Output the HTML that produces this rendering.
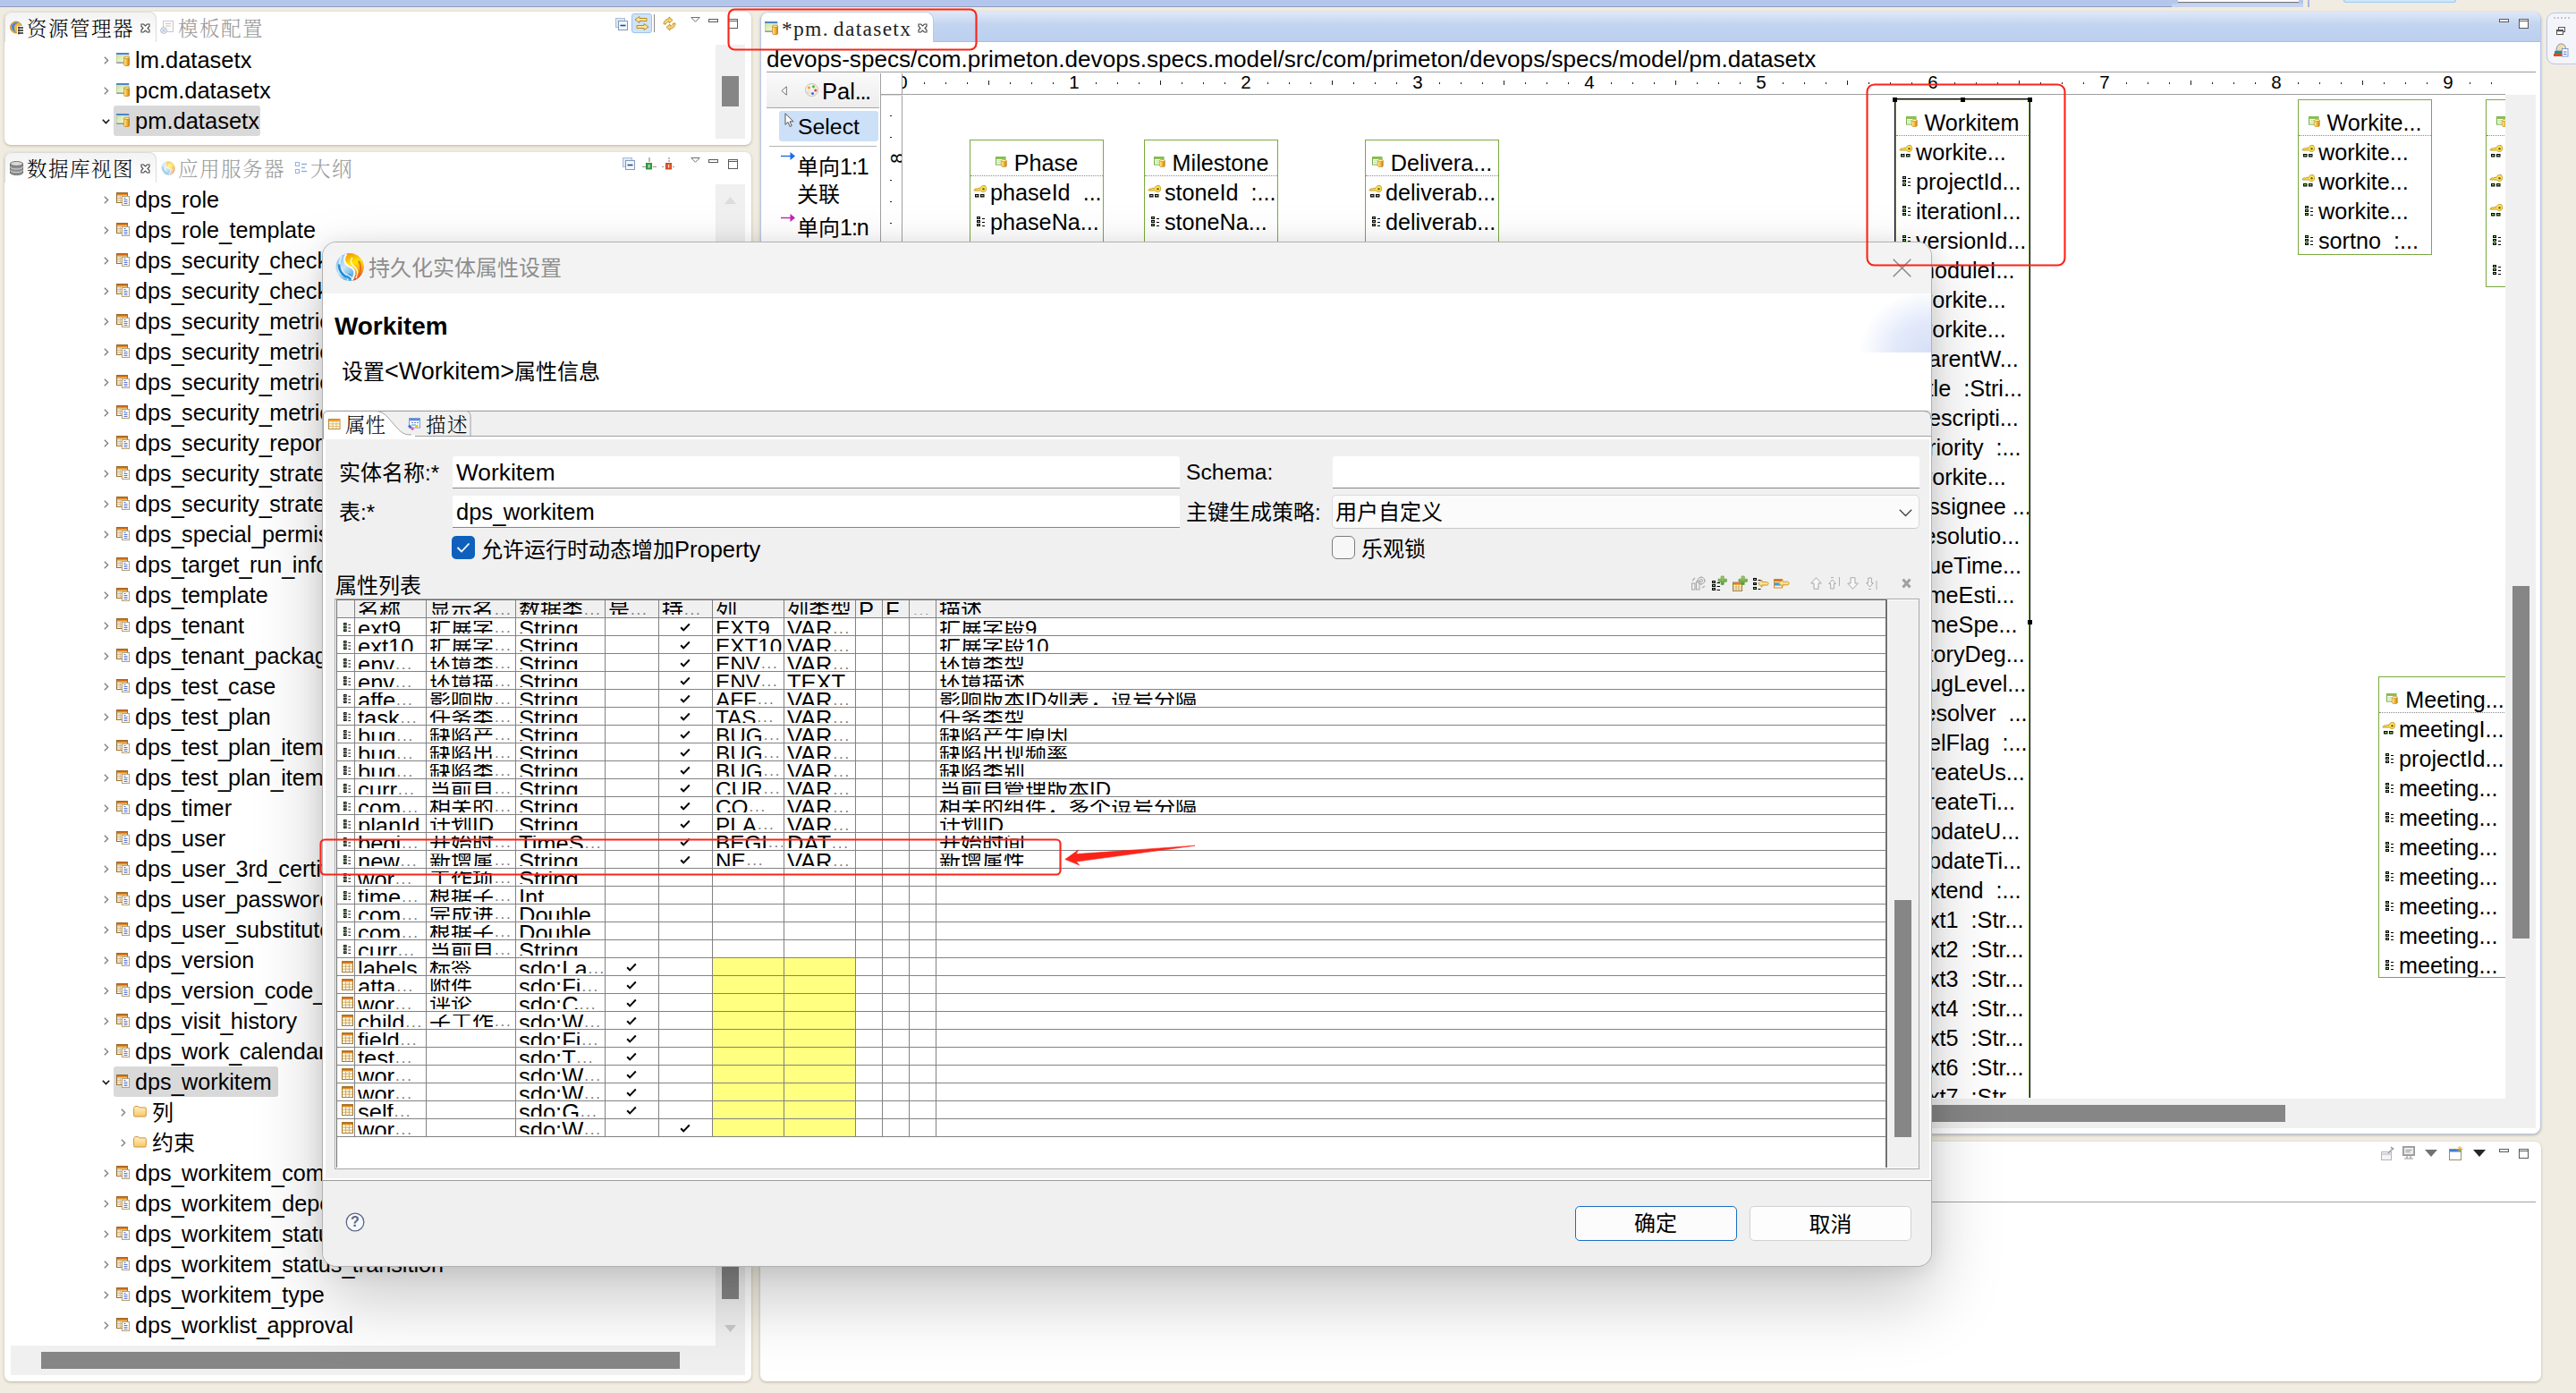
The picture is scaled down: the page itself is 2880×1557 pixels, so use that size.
<!DOCTYPE html>
<html lang="zh-CN"><head><meta charset="utf-8"><title>持久化实体属性设置</title>
<style>
html,body{margin:0;padding:0}
html{width:2880px;height:1557px;overflow:hidden;background:#f0ece1}
body{width:2880px;height:1557px;overflow:hidden;position:relative;background:#f0ece1;
 font-family:"Liberation Sans","Noto Sans CJK SC",sans-serif;font-size:25.5px;color:#000}
div,span,svg{position:absolute;box-sizing:border-box}
.ic{overflow:visible}
.t{white-space:nowrap;line-height:34px;height:34px}
.t2{font-size:25.200px}
s{text-decoration:none;letter-spacing:-2.600px;position:relative;top:2px}
.ser{font-family:"Liberation Serif","Noto Serif CJK SC",serif;font-weight:300;font-size:22.500px;letter-spacing:1.500px;white-space:nowrap;line-height:30px}
.cj{font-family:"Liberation Sans","Noto Sans CJK SC",sans-serif;font-size:24px;white-space:nowrap;padding-top:1px}
.cj b,.t b,.c b{font-weight:normal;font-size:25.5px}
.panel{background:#fff;border-radius:7px;box-shadow:0 1px 3px rgba(120,110,80,.45)}
.tab{border:1px solid #dcdcdc;border-bottom:none;border-radius:8px 8px 0 0;background:linear-gradient(#f3f3f3,#fff)}
.gray{color:#9a9a9a}
.sel{background:#d9d9d9;border-radius:3px}
.ent{border:1px solid #7aa93f;background:#fff}
.ent>div.in{left:0;top:0;right:0;bottom:0;overflow:hidden}
.ent .dot{left:0;right:0;height:0;border-top:1px dotted #8a8a8a}
.et{white-space:nowrap;line-height:33px;height:33px;font-size:25.200px}
.rul{font-size:20.5px;line-height:22px;white-space:nowrap}
.c{top:4px;height:14px;overflow:hidden;white-space:nowrap}
.c span{position:absolute;left:0;top:-5.800px;line-height:30px;font-size:25.5px;white-space:nowrap}
.c span.z{font-size:24px;font-family:"Liberation Sans","Noto Sans CJK SC",sans-serif}
.c i{font-style:normal;letter-spacing:1.800px;color:#777;font-size:17px;position:relative;top:-3.500px;margin-left:1px}
.vl{width:1px;background:#828282}
.hl{height:1px;background:#828282}
.ck{width:12px;height:10px}
</style></head><body>
<svg width="0" height="0" style="position:absolute"><defs>
<linearGradient id="gCyl" x1="0" x2="1"><stop offset="0" stop-color="#fff3a8"/><stop offset=".55" stop-color="#f3b52e"/><stop offset="1" stop-color="#c97d10"/></linearGradient>
<linearGradient id="gWin" x1="0" y1="0" x2="1" y2="1"><stop offset="0" stop-color="#c4e27e"/><stop offset="1" stop-color="#ffffff"/></linearGradient>
<linearGradient id="gFold" x1="0" y1="0" x2="0" y2="1"><stop offset="0" stop-color="#fff1c4"/><stop offset="1" stop-color="#f7c765"/></linearGradient>
<linearGradient id="gOr" x1="0" y1="0" x2="0" y2="1"><stop offset="0" stop-color="#c9540d"/><stop offset="1" stop-color="#f9b233"/></linearGradient>
<linearGradient id="gPlus" x1="0" y1="0" x2="0" y2="1"><stop offset="0" stop-color="#b9d36a"/><stop offset="1" stop-color="#3f9b3a"/></linearGradient>
<linearGradient id="gArr" x1="0" y1="0" x2="0" y2="1"><stop offset="0" stop-color="#fffbe0"/><stop offset="1" stop-color="#f3c24a"/></linearGradient>
<linearGradient id="gLogoB" x1="0" y1="0" x2="1" y2="1"><stop offset="0" stop-color="#5fb0ea"/><stop offset=".4" stop-color="#cfe5f7"/><stop offset=".75" stop-color="#4aa6e2"/><stop offset="1" stop-color="#0c80d0"/></linearGradient><linearGradient id="gLogoO" x1="0" y1="0" x2=".3" y2="1"><stop offset="0" stop-color="#f08a00"/><stop offset=".45" stop-color="#ffe400"/><stop offset=".8" stop-color="#f6a21a"/><stop offset="1" stop-color="#e4521c"/></linearGradient><radialGradient id="gLogo" cx=".35" cy=".3" r=".9"><stop offset="0" stop-color="#ffe27a"/><stop offset=".5" stop-color="#f59a1c"/><stop offset="1" stop-color="#e8601a"/></radialGradient>
<!-- datasetx file: window + cylinder 15x15 -->
<symbol id="iDs" viewBox="0 0 15 15"><rect x="0" y="0" width="14" height="11" fill="url(#gWin)" stroke="#9a9a9a" stroke-width=".6"/><rect x="0" y="0" width="14" height="2.2" fill="#4f86c9"/><rect x="0" y="2.2" width="14" height=".8" fill="#cfe0f3"/><rect x="0.3" y="10.6" width="8" height="1.2" fill="#8c8c8c"/><path d="M8.6 5.2h6v8.2a3 1.3 0 0 1-6 0z" fill="url(#gCyl)" stroke="#b9770f" stroke-width=".7"/><ellipse cx="11.6" cy="5.3" rx="3" ry="1.2" fill="#fff0a0" stroke="#b9770f" stroke-width=".7"/></symbol>
<!-- db table icon 15x15 -->
<symbol id="iTb" viewBox="0 0 15 15"><rect x=".5" y=".5" width="12" height="11" fill="#fff" stroke="#9b6a2c" stroke-width="1"/><rect x="1" y="1" width="11" height="2.4" fill="url(#gOr)"/><rect x="1" y="4" width="3.4" height="2" fill="#d8ecf7"/><rect x="1" y="6.8" width="3.4" height="2" fill="#d8ecf7"/><path d="M1 3.8h11M1 6.5h5M1 9.2h5M4.7 3.5v8" stroke="#c9a35c" stroke-width=".7" fill="none"/><rect x="6.500" y="4.500" width="8" height="10" fill="#fcfdff" stroke="#b5a074" stroke-width="1"/><path d="M8.500 6.500h2M8.500 8.500h4M8.500 10.500h4M8.500 12.500h4" stroke="#5b78cf" stroke-width="1"/></symbol>
<!-- folder 15x13 -->
<symbol id="iFo" viewBox="0 0 15 13"><path d="M.6 3.2c0-1.4.6-2.6 2.2-2.6h2.4c.9 0 1.3.5 1.7 1.3h6.2c.8 0 1.2.4 1.2 1.2v7.6c0 .9-.4 1.3-1.2 1.3H1.8C1 12 .6 11.600.6 10.700z" fill="url(#gFold)" stroke="#d39236" stroke-width="1"/></symbol>
<!-- entity icon 13x12 -->
<symbol id="iEn" viewBox="0 0 13 12"><rect x=".5" y=".5" width="10.500" height="8.600" fill="#fff" stroke="#74b043" stroke-width="1"/><rect x=".5" y=".5" width="10.500" height="2.500" fill="#8cc152"/><path d="M1.500 4.800h9M1.500 6.800h5" stroke="#b5dc8a" stroke-width="1"/><path d="M6.300 4.600h6v5.800a3 1.200 0 0 1-6 0z" fill="url(#gCyl)" stroke="#c08414" stroke-width=".6"/><ellipse cx="9.300" cy="4.600" rx="3" ry="1.100" fill="#fff3b0" stroke="#c08414" stroke-width=".6"/></symbol>
<!-- key attr icon 15x14 -->
<symbol id="iKey" viewBox="0 0 15 14"><path d="M.8 5.600l2.400-2 1.200.700 1.600-1.300 1.500 1c.8-2.200 2.400-3.600 4.300-3.600 1.800 0 3 1.400 3 3.400s-1.400 3.700-3.300 3.700c-1.300 0-2.300-.5-2.900-1.500H1.800z" fill="#fbe354" stroke="#b8901c" stroke-width=".9" stroke-linejoin="round"/><circle cx="11.500" cy="4.200" r="1.200" fill="#7a5a14"/><rect x="2" y="10" width="4.500" height="3.500" fill="#000"/><rect x="8" y="10" width="4.500" height="3.500" fill="#000"/><rect x="3" y="11" width="2.500" height="1.300" fill="#7fd35a"/><rect x="9" y="11" width="2.500" height="1.300" fill="#7fd35a"/></symbol>
<!-- plain attr icon 10x12 -->
<symbol id="iAt" viewBox="0 0 10 12"><g fill="#000"><rect x="0" y="0" width="4" height="3"/><rect x="0" y="4" width="4" height="3"/><rect x="0" y="8" width="4" height="3"/></g><g fill="#7fd35a"><rect x="1" y="1" width="2" height="1"/><rect x="1" y="5" width="2" height="1"/><rect x="1" y="9" width="2" height="1"/></g><path d="M6 2.500h3M6 6.500h3M6 10.500h3" stroke="#000" stroke-width="1"/></symbol>
<!-- table-row icon in grid (orange table) 13x13 -->
<symbol id="iGr" viewBox="0 0 13 13"><rect x=".5" y=".5" width="12" height="12" fill="#fffbe8" stroke="#a8782f" stroke-width="1"/><rect x="1" y="1" width="11" height="2.600" fill="url(#gOr)"/><path d="M1 6.200h11M1 9.200h11M4.600 3.600v9M8.400 3.600v9" stroke="#c9a35c" stroke-width=".9"/></symbol>
<!-- eclipse-like close x for tabs -->
<symbol id="iX" viewBox="0 0 11 11"><path d="M1 1h2.500l2 2 2-2H10v2.500l-2 2 2 2V10H7.500l-2-2-2 2H1V7.500l2-2-2-2z" fill="#fff" stroke="#4c4c4c" stroke-width="1.150"/></symbol>
<symbol id="iMin" viewBox="0 0 11 5"><rect x=".5" y=".5" width="10" height="3" fill="#fff" stroke="#5a5a5a" stroke-width="1"/></symbol>
<symbol id="iMax" viewBox="0 0 12 11"><rect x=".5" y=".5" width="10" height="10" fill="#fff" stroke="#5a5a5a" stroke-width="1"/><path d="M.5 2.500h10" stroke="#5a5a5a" stroke-width="1"/></symbol>
<symbol id="iTri" viewBox="0 0 11 6"><path d="M.8.500h9.400L5.500 5.300z" fill="#fff" stroke="#707070" stroke-width="1"/></symbol>
<symbol id="iColl" viewBox="0 0 14 14"><rect x=".5" y=".5" width="10" height="10" fill="#dbe9f8" stroke="#a9bcd8"/><rect x="3.500" y="3.500" width="10" height="10" fill="#f1f7fd" stroke="#8398b8"/><path d="M5.500 8.500h6" stroke="#1f4f8f" stroke-width="1.600"/></symbol>
<symbol id="iLogo" viewBox="0 0 32 32"><clipPath id="cLogo"><circle cx="16" cy="16" r="15.500"/></clipPath><g clip-path="url(#cLogo)"><rect width="32" height="32" fill="url(#gLogoB)"/><path d="M7 4C3 10 5 17 9 22s6 6 4 10" fill="none" stroke="#fff" stroke-width="1.600" opacity=".75"/><path d="M4 13c0 7 3 11 8 14" fill="none" stroke="#1283d4" stroke-width="2.600" opacity=".9"/><path d="M11 27c2 2 5 3 8 3l-2-6c-2-1-4-1-6 3z" fill="#1a8ad8" opacity=".85"/><path d="M12 24c3 1 6 3 8 7" fill="none" stroke="#fff" stroke-width="1.800" opacity=".8"/><path d="M13 .500C8 6 10 12 16 15s8 7 3 16.500h14V0z" fill="url(#gLogoO)"/><path d="M12.500 1.500C8 7 10 12.500 16 15.500s7 7 2.500 15.500" fill="none" stroke="#fff" stroke-width="2" opacity=".9"/><path d="M19 5.500c-3 3-2 7 2 10s5 8 2 13" fill="none" stroke="#fffbe0" stroke-width="1.700" opacity=".9"/><path d="M26 9c3 5 3 12-1 18" fill="none" stroke="#e8631c" stroke-width="2.200" opacity=".85"/></g></symbol>
</defs></svg>
<div style="left:0px;top:0px;width:2575px;height:7px;background:#b5c6ec"></div>
<div style="left:0px;top:7px;width:2428px;height:1px;background:#8d9bbd"></div>
<div style="left:2428px;top:4px;width:147px;height:4px;background:#c6d3ef"></div>
<div style="left:2435px;top:0px;width:135px;height:3px;background:#fff;border-bottom:1px solid #777"></div>
<div style="left:2580px;top:0px;width:2px;height:8px;background:#a9b8dc"></div>
<div style="left:2620px;top:0px;width:126px;height:3px;background:#cfe6fb;border:1px solid #9cc8ee;border-top:none;border-radius:0 0 3px 3px"></div>
<div class="panel" style="left:5px;top:13px;width:835px;height:148.5px;"></div>
<div class="tab" style="left:5px;top:13px;width:170px;height:34px;"></div>
<svg class="ic" style="left:11px;top:23px" width="16" height="16"><circle cx="7" cy="7.500" r="6.500" fill="#f3b63a" stroke="#b97a12" stroke-width=".8"/><path d="M2 5c2-3 6-4 8-2-3 0-5 2-5 5s1 4 2 5c-3 0-6-4-5-8z" fill="#4a86d8"/><rect x="8" y="6" width="8" height="10" fill="#fff"/><path d="M9 8h6M9 11h6M9 14h6" stroke="#222" stroke-width="1.300"/><path d="M10 6.500v9" stroke="#222" stroke-width=".8"/></svg>
<div class="ser" style="left:30px;top:17.500px">资源管理器</div>
<svg class="ic" style="left:157px;top:26px" width="11" height="11" ><use href="#iX"/></svg>
<svg class="ic" style="left:179px;top:23px" width="16" height="16"><rect x="3.500" y=".5" width="11" height="12" fill="#fafafa" stroke="#c9c9c9"/><path d="M6 3.500h6M6 6h6" stroke="#d9c9a5" stroke-width="1.200"/><circle cx="4" cy="11" r="3.500" fill="#e9eef8" stroke="#a9b6d0" stroke-width=".8"/><path d="M2 9l4 4M6 9l-4 4" stroke="#a9b6d0" stroke-width=".8"/></svg>
<div class="ser gray" style="left:199px;top:17.500px">模板配置</div>
<svg class="ic" style="left:688px;top:19.5px" width="14" height="14" ><use href="#iColl"/></svg>
<div style="left:706px;top:15px;width:23px;height:22px;background:#cfe3f8;border:1px solid #9cc3ec;border-radius:3px"></div>
<svg class="ic" style="left:709px;top:17px" width="17" height="18"><path d="M6 1.500L1 5l5 3.500V6.500h8v-3H6z" fill="#fbe59a" stroke="#b98a1f" stroke-width="1"/><path d="M11 9.500L16 13l-5 3.500v-2H3v-3h8z" fill="#fbe59a" stroke="#b98a1f" stroke-width="1"/></svg>
<div style="left:731px;top:16px;width:1px;height:20px;background:#8a8a8a"></div>
<svg class="ic" style="left:740px;top:18px" width="17" height="17"><path d="M2 9c0-4 3-6 6-6V1l4 3.500L8 8V6C6 6 4.500 7 4.500 9z" fill="#f7d774" stroke="#b98a1f" stroke-width=".9"/><path d="M15 8c0 4-3 6-6 6v2l-4-3.500L9 9v2c2 0 3.500-1 3.500-3z" fill="#f7d774" stroke="#b98a1f" stroke-width=".9"/></svg>
<svg class="ic" style="left:772px;top:19px" width="11" height="6" ><use href="#iTri"/></svg>
<svg class="ic" style="left:792px;top:21px" width="11" height="5" ><use href="#iMin"/></svg>
<svg class="ic" style="left:814px;top:21px" width="12" height="11" ><use href="#iMax"/></svg>
<div style="left:800px;top:50px;width:33px;height:105px;background:#f0f0f0"></div>
<div style="left:807px;top:85px;width:19px;height:34px;background:#868686"></div>
<svg class="ic" style="left:115.5px;top:62.5px" width="6" height="9"><path d="M.8.800l3.800 3.700L.8 8.200" fill="none" stroke="#808080" stroke-width="1.400"/></svg><svg class="ic" style="left:130px;top:59px" width="15" height="15" ><use href="#iDs"/></svg><div class="t" style="left:151px;top:50px">lm.datasetx</div>
<svg class="ic" style="left:115.5px;top:96.5px" width="6" height="9"><path d="M.8.800l3.800 3.700L.8 8.200" fill="none" stroke="#808080" stroke-width="1.400"/></svg><svg class="ic" style="left:130px;top:93px" width="15" height="15" ><use href="#iDs"/></svg><div class="t" style="left:151px;top:84px">pcm.datasetx</div>
<div class="sel" style="left:127px;top:118px;width:164px;height:34px;"></div><svg class="ic" style="left:113.5px;top:132.5px" width="9" height="6"><path d="M.8.800l3.700 3.800L8.200.800" fill="none" stroke="#111" stroke-width="1.500"/></svg><svg class="ic" style="left:130px;top:127px" width="15" height="15" ><use href="#iDs"/></svg><div class="t" style="left:151px;top:118px">pm.datasetx</div>
<div class="panel" style="left:5px;top:170px;width:835px;height:1374px;"></div>
<div class="tab" style="left:5px;top:170px;width:170px;height:34px;"></div>
<svg class="ic" style="left:11px;top:180px" width="15" height="16"><path d="M.5 3v10c0 1.500 3 2.500 7 2.500s7-1 7-2.500V3z" fill="#8d8d8d" stroke="#5a5a5a" stroke-width=".8"/><ellipse cx="7.500" cy="3" rx="7" ry="2.500" fill="#d9d9d9" stroke="#5a5a5a" stroke-width=".8"/><path d="M.5 6.500c0 1.500 3 2.500 7 2.500s7-1 7-2.500M.5 10c0 1.500 3 2.500 7 2.500s7-1 7-2.500" fill="none" stroke="#e0e0e0" stroke-width="1"/></svg>
<div class="ser" style="left:30px;top:174.500px">数据库视图</div>
<svg class="ic" style="left:157px;top:183px" width="11" height="11" ><use href="#iX"/></svg>
<svg class="ic" style="left:180px;top:180px" width="16" height="16" opacity=".55"><use href="#iLogo"/></svg>
<div class="ser gray" style="left:199px;top:174.500px">应用服务器</div>
<svg class="ic" style="left:330px;top:181px" width="14" height="14"><rect x=".5" y=".5" width="4" height="4" fill="#fff" stroke="#8fb4df"/><rect x=".5" y="8.500" width="4" height="4" fill="#fff" stroke="#8fb4df"/><path d="M7 2.500h6M7 6.500h4M7 10.500h6" stroke="#8fb4df" stroke-width="1.300"/></svg>
<div class="ser gray" style="left:347px;top:174.500px">大纲</div>
<svg class="ic" style="left:696px;top:176px" width="14" height="14" ><use href="#iColl"/></svg>
<svg class="ic" style="left:718px;top:176px" width="16" height="14"><path d="M0 10.500h16" stroke="#9a9a9a" stroke-width="1.200" stroke-dasharray="5 1"/><rect x="4.500" y="6.500" width="6" height="6.500" fill="#3ba84a" stroke="#1e7a2c" stroke-width=".8"/><rect x="7" y="8" width="1.200" height="3.500" fill="#d8f5d8"/><path d="M8 0v5" stroke="#8a8a8a" stroke-width="1.200"/></svg>
<svg class="ic" style="left:740px;top:176px" width="16" height="14"><path d="M0 10.500h16" stroke="#9a9a9a" stroke-width="1.200" stroke-dasharray="2 2"/><rect x="4.500" y="6.500" width="6" height="6.500" fill="#e2572b" stroke="#b3381a" stroke-width=".8"/><rect x="7" y="8" width="1.200" height="3.500" fill="#fde0d8"/><path d="M8 0v5" stroke="#8a8a8a" stroke-width="1.200" stroke-dasharray="2 1"/></svg>
<svg class="ic" style="left:772px;top:176px" width="11" height="6" ><use href="#iTri"/></svg>
<svg class="ic" style="left:792px;top:178px" width="11" height="5" ><use href="#iMin"/></svg>
<svg class="ic" style="left:814px;top:178px" width="12" height="11" ><use href="#iMax"/></svg>
<div style="left:800px;top:206px;width:33px;height:1298px;background:#f0f0f0"></div>
<svg class="ic" style="left:810px;top:220px" width="13" height="8"><path d="M0 8L6.500 0 13 8z" fill="#dcdcdc"/></svg>
<svg class="ic" style="left:810px;top:1481px" width="13" height="8"><path d="M0 0l6.500 8L13 0z" fill="#c9c9c9"/></svg>
<div style="left:807px;top:1370px;width:19px;height:82px;background:#868686"></div>
<div style="left:12px;top:1504px;width:821px;height:33px;background:#f0f0f0"></div>
<div style="left:46px;top:1511px;width:714px;height:19px;background:#868686"></div>
<svg class="ic" style="left:115.5px;top:218.5px" width="6" height="9"><path d="M.8.800l3.800 3.700L.8 8.200" fill="none" stroke="#808080" stroke-width="1.400"/></svg><svg class="ic" style="left:130px;top:215px" width="15" height="15" ><use href="#iTb"/></svg><div class="t t2" style="left:151px;top:206px">dps<s>_</s>role</div>
<svg class="ic" style="left:115.5px;top:252.5px" width="6" height="9"><path d="M.8.800l3.800 3.700L.8 8.200" fill="none" stroke="#808080" stroke-width="1.400"/></svg><svg class="ic" style="left:130px;top:249px" width="15" height="15" ><use href="#iTb"/></svg><div class="t t2" style="left:151px;top:240px">dps<s>_</s>role<s>_</s>template</div>
<svg class="ic" style="left:115.5px;top:286.5px" width="6" height="9"><path d="M.8.800l3.800 3.700L.8 8.200" fill="none" stroke="#808080" stroke-width="1.400"/></svg><svg class="ic" style="left:130px;top:283px" width="15" height="15" ><use href="#iTb"/></svg><div class="t t2" style="left:151px;top:274px">dps<s>_</s>security<s>_</s>check<s>_</s>item</div>
<svg class="ic" style="left:115.5px;top:320.5px" width="6" height="9"><path d="M.8.800l3.800 3.700L.8 8.200" fill="none" stroke="#808080" stroke-width="1.400"/></svg><svg class="ic" style="left:130px;top:317px" width="15" height="15" ><use href="#iTb"/></svg><div class="t t2" style="left:151px;top:308px">dps<s>_</s>security<s>_</s>check<s>_</s>result</div>
<svg class="ic" style="left:115.5px;top:354.5px" width="6" height="9"><path d="M.8.800l3.800 3.700L.8 8.200" fill="none" stroke="#808080" stroke-width="1.400"/></svg><svg class="ic" style="left:130px;top:351px" width="15" height="15" ><use href="#iTb"/></svg><div class="t t2" style="left:151px;top:342px">dps<s>_</s>security<s>_</s>metric</div>
<svg class="ic" style="left:115.5px;top:388.5px" width="6" height="9"><path d="M.8.800l3.800 3.700L.8 8.200" fill="none" stroke="#808080" stroke-width="1.400"/></svg><svg class="ic" style="left:130px;top:385px" width="15" height="15" ><use href="#iTb"/></svg><div class="t t2" style="left:151px;top:376px">dps<s>_</s>security<s>_</s>metric<s>_</s>item</div>
<svg class="ic" style="left:115.5px;top:422.5px" width="6" height="9"><path d="M.8.800l3.800 3.700L.8 8.200" fill="none" stroke="#808080" stroke-width="1.400"/></svg><svg class="ic" style="left:130px;top:419px" width="15" height="15" ><use href="#iTb"/></svg><div class="t t2" style="left:151px;top:410px">dps<s>_</s>security<s>_</s>metric<s>_</s>rule</div>
<svg class="ic" style="left:115.5px;top:456.5px" width="6" height="9"><path d="M.8.800l3.800 3.700L.8 8.200" fill="none" stroke="#808080" stroke-width="1.400"/></svg><svg class="ic" style="left:130px;top:453px" width="15" height="15" ><use href="#iTb"/></svg><div class="t t2" style="left:151px;top:444px">dps<s>_</s>security<s>_</s>metric<s>_</s>value</div>
<svg class="ic" style="left:115.5px;top:490.5px" width="6" height="9"><path d="M.8.800l3.800 3.700L.8 8.200" fill="none" stroke="#808080" stroke-width="1.400"/></svg><svg class="ic" style="left:130px;top:487px" width="15" height="15" ><use href="#iTb"/></svg><div class="t t2" style="left:151px;top:478px">dps<s>_</s>security<s>_</s>report</div>
<svg class="ic" style="left:115.5px;top:524.5px" width="6" height="9"><path d="M.8.800l3.800 3.700L.8 8.200" fill="none" stroke="#808080" stroke-width="1.400"/></svg><svg class="ic" style="left:130px;top:521px" width="15" height="15" ><use href="#iTb"/></svg><div class="t t2" style="left:151px;top:512px">dps<s>_</s>security<s>_</s>strategy</div>
<svg class="ic" style="left:115.5px;top:558.5px" width="6" height="9"><path d="M.8.800l3.800 3.700L.8 8.200" fill="none" stroke="#808080" stroke-width="1.400"/></svg><svg class="ic" style="left:130px;top:555px" width="15" height="15" ><use href="#iTb"/></svg><div class="t t2" style="left:151px;top:546px">dps<s>_</s>security<s>_</s>strategy<s>_</s>item</div>
<svg class="ic" style="left:115.5px;top:592.5px" width="6" height="9"><path d="M.8.800l3.800 3.700L.8 8.200" fill="none" stroke="#808080" stroke-width="1.400"/></svg><svg class="ic" style="left:130px;top:589px" width="15" height="15" ><use href="#iTb"/></svg><div class="t t2" style="left:151px;top:580px">dps<s>_</s>special<s>_</s>permission</div>
<svg class="ic" style="left:115.5px;top:626.5px" width="6" height="9"><path d="M.8.800l3.800 3.700L.8 8.200" fill="none" stroke="#808080" stroke-width="1.400"/></svg><svg class="ic" style="left:130px;top:623px" width="15" height="15" ><use href="#iTb"/></svg><div class="t t2" style="left:151px;top:614px">dps<s>_</s>target<s>_</s>run<s>_</s>info</div>
<svg class="ic" style="left:115.5px;top:660.5px" width="6" height="9"><path d="M.8.800l3.800 3.700L.8 8.200" fill="none" stroke="#808080" stroke-width="1.400"/></svg><svg class="ic" style="left:130px;top:657px" width="15" height="15" ><use href="#iTb"/></svg><div class="t t2" style="left:151px;top:648px">dps<s>_</s>template</div>
<svg class="ic" style="left:115.5px;top:694.5px" width="6" height="9"><path d="M.8.800l3.800 3.700L.8 8.200" fill="none" stroke="#808080" stroke-width="1.400"/></svg><svg class="ic" style="left:130px;top:691px" width="15" height="15" ><use href="#iTb"/></svg><div class="t t2" style="left:151px;top:682px">dps<s>_</s>tenant</div>
<svg class="ic" style="left:115.5px;top:728.5px" width="6" height="9"><path d="M.8.800l3.800 3.700L.8 8.200" fill="none" stroke="#808080" stroke-width="1.400"/></svg><svg class="ic" style="left:130px;top:725px" width="15" height="15" ><use href="#iTb"/></svg><div class="t t2" style="left:151px;top:716px">dps<s>_</s>tenant<s>_</s>package</div>
<svg class="ic" style="left:115.5px;top:762.5px" width="6" height="9"><path d="M.8.800l3.800 3.700L.8 8.200" fill="none" stroke="#808080" stroke-width="1.400"/></svg><svg class="ic" style="left:130px;top:759px" width="15" height="15" ><use href="#iTb"/></svg><div class="t t2" style="left:151px;top:750px">dps<s>_</s>test<s>_</s>case</div>
<svg class="ic" style="left:115.5px;top:796.5px" width="6" height="9"><path d="M.8.800l3.800 3.700L.8 8.200" fill="none" stroke="#808080" stroke-width="1.400"/></svg><svg class="ic" style="left:130px;top:793px" width="15" height="15" ><use href="#iTb"/></svg><div class="t t2" style="left:151px;top:784px">dps<s>_</s>test<s>_</s>plan</div>
<svg class="ic" style="left:115.5px;top:830.5px" width="6" height="9"><path d="M.8.800l3.800 3.700L.8 8.200" fill="none" stroke="#808080" stroke-width="1.400"/></svg><svg class="ic" style="left:130px;top:827px" width="15" height="15" ><use href="#iTb"/></svg><div class="t t2" style="left:151px;top:818px">dps<s>_</s>test<s>_</s>plan<s>_</s>item</div>
<svg class="ic" style="left:115.5px;top:864.5px" width="6" height="9"><path d="M.8.800l3.800 3.700L.8 8.200" fill="none" stroke="#808080" stroke-width="1.400"/></svg><svg class="ic" style="left:130px;top:861px" width="15" height="15" ><use href="#iTb"/></svg><div class="t t2" style="left:151px;top:852px">dps<s>_</s>test<s>_</s>plan<s>_</s>item<s>_</s>result</div>
<svg class="ic" style="left:115.5px;top:898.5px" width="6" height="9"><path d="M.8.800l3.800 3.700L.8 8.200" fill="none" stroke="#808080" stroke-width="1.400"/></svg><svg class="ic" style="left:130px;top:895px" width="15" height="15" ><use href="#iTb"/></svg><div class="t t2" style="left:151px;top:886px">dps<s>_</s>timer</div>
<svg class="ic" style="left:115.5px;top:932.5px" width="6" height="9"><path d="M.8.800l3.800 3.700L.8 8.200" fill="none" stroke="#808080" stroke-width="1.400"/></svg><svg class="ic" style="left:130px;top:929px" width="15" height="15" ><use href="#iTb"/></svg><div class="t t2" style="left:151px;top:920px">dps<s>_</s>user</div>
<svg class="ic" style="left:115.5px;top:966.5px" width="6" height="9"><path d="M.8.800l3.800 3.700L.8 8.200" fill="none" stroke="#808080" stroke-width="1.400"/></svg><svg class="ic" style="left:130px;top:963px" width="15" height="15" ><use href="#iTb"/></svg><div class="t t2" style="left:151px;top:954px">dps<s>_</s>user<s>_</s>3rd<s>_</s>certificate</div>
<svg class="ic" style="left:115.5px;top:1000.5px" width="6" height="9"><path d="M.8.800l3.800 3.700L.8 8.200" fill="none" stroke="#808080" stroke-width="1.400"/></svg><svg class="ic" style="left:130px;top:997px" width="15" height="15" ><use href="#iTb"/></svg><div class="t t2" style="left:151px;top:988px">dps<s>_</s>user<s>_</s>password</div>
<svg class="ic" style="left:115.5px;top:1034.5px" width="6" height="9"><path d="M.8.800l3.800 3.700L.8 8.200" fill="none" stroke="#808080" stroke-width="1.400"/></svg><svg class="ic" style="left:130px;top:1031px" width="15" height="15" ><use href="#iTb"/></svg><div class="t t2" style="left:151px;top:1022px">dps<s>_</s>user<s>_</s>substitute</div>
<svg class="ic" style="left:115.5px;top:1068.5px" width="6" height="9"><path d="M.8.800l3.800 3.700L.8 8.200" fill="none" stroke="#808080" stroke-width="1.400"/></svg><svg class="ic" style="left:130px;top:1065px" width="15" height="15" ><use href="#iTb"/></svg><div class="t t2" style="left:151px;top:1056px">dps<s>_</s>version</div>
<svg class="ic" style="left:115.5px;top:1102.5px" width="6" height="9"><path d="M.8.800l3.800 3.700L.8 8.200" fill="none" stroke="#808080" stroke-width="1.400"/></svg><svg class="ic" style="left:130px;top:1099px" width="15" height="15" ><use href="#iTb"/></svg><div class="t t2" style="left:151px;top:1090px">dps<s>_</s>version<s>_</s>code<s>_</s>repo</div>
<svg class="ic" style="left:115.5px;top:1136.5px" width="6" height="9"><path d="M.8.800l3.800 3.700L.8 8.200" fill="none" stroke="#808080" stroke-width="1.400"/></svg><svg class="ic" style="left:130px;top:1133px" width="15" height="15" ><use href="#iTb"/></svg><div class="t t2" style="left:151px;top:1124px">dps<s>_</s>visit<s>_</s>history</div>
<svg class="ic" style="left:115.5px;top:1170.5px" width="6" height="9"><path d="M.8.800l3.800 3.700L.8 8.200" fill="none" stroke="#808080" stroke-width="1.400"/></svg><svg class="ic" style="left:130px;top:1167px" width="15" height="15" ><use href="#iTb"/></svg><div class="t t2" style="left:151px;top:1158px">dps<s>_</s>work<s>_</s>calendar</div>
<div class="sel" style="left:127px;top:1192px;width:184px;height:34px;"></div><svg class="ic" style="left:113.5px;top:1206.5px" width="9" height="6"><path d="M.8.800l3.700 3.800L8.200.800" fill="none" stroke="#111" stroke-width="1.500"/></svg><svg class="ic" style="left:130px;top:1201px" width="15" height="15" ><use href="#iTb"/></svg><div class="t t2" style="left:151px;top:1192px">dps<s>_</s>workitem</div>
<svg class="ic" style="left:134.5px;top:1238.5px" width="6" height="9"><path d="M.8.800l3.800 3.700L.8 8.200" fill="none" stroke="#808080" stroke-width="1.400"/></svg><svg class="ic" style="left:149px;top:1236px" width="15" height="13" ><use href="#iFo"/></svg><div class="t t2" style="left:170px;top:1226px"><span class="cj" style="position:static">列</span></div>
<svg class="ic" style="left:134.5px;top:1272.5px" width="6" height="9"><path d="M.8.800l3.800 3.700L.8 8.200" fill="none" stroke="#808080" stroke-width="1.400"/></svg><svg class="ic" style="left:149px;top:1270px" width="15" height="13" ><use href="#iFo"/></svg><div class="t t2" style="left:170px;top:1260px"><span class="cj" style="position:static">约束</span></div>
<svg class="ic" style="left:115.5px;top:1306.5px" width="6" height="9"><path d="M.8.800l3.800 3.700L.8 8.200" fill="none" stroke="#808080" stroke-width="1.400"/></svg><svg class="ic" style="left:130px;top:1303px" width="15" height="15" ><use href="#iTb"/></svg><div class="t t2" style="left:151px;top:1294px">dps<s>_</s>workitem<s>_</s>comment</div>
<svg class="ic" style="left:115.5px;top:1340.5px" width="6" height="9"><path d="M.8.800l3.800 3.700L.8 8.200" fill="none" stroke="#808080" stroke-width="1.400"/></svg><svg class="ic" style="left:130px;top:1337px" width="15" height="15" ><use href="#iTb"/></svg><div class="t t2" style="left:151px;top:1328px">dps<s>_</s>workitem<s>_</s>dependency</div>
<svg class="ic" style="left:115.5px;top:1374.5px" width="6" height="9"><path d="M.8.800l3.800 3.700L.8 8.200" fill="none" stroke="#808080" stroke-width="1.400"/></svg><svg class="ic" style="left:130px;top:1371px" width="15" height="15" ><use href="#iTb"/></svg><div class="t t2" style="left:151px;top:1362px">dps<s>_</s>workitem<s>_</s>status</div>
<svg class="ic" style="left:115.5px;top:1408.5px" width="6" height="9"><path d="M.8.800l3.800 3.700L.8 8.200" fill="none" stroke="#808080" stroke-width="1.400"/></svg><svg class="ic" style="left:130px;top:1405px" width="15" height="15" ><use href="#iTb"/></svg><div class="t t2" style="left:151px;top:1396px">dps<s>_</s>workitem<s>_</s>status<s>_</s>transition</div>
<svg class="ic" style="left:115.5px;top:1442.5px" width="6" height="9"><path d="M.8.800l3.800 3.700L.8 8.200" fill="none" stroke="#808080" stroke-width="1.400"/></svg><svg class="ic" style="left:130px;top:1439px" width="15" height="15" ><use href="#iTb"/></svg><div class="t t2" style="left:151px;top:1430px">dps<s>_</s>workitem<s>_</s>type</div>
<svg class="ic" style="left:115.5px;top:1476.5px" width="6" height="9"><path d="M.8.800l3.800 3.700L.8 8.200" fill="none" stroke="#808080" stroke-width="1.400"/></svg><svg class="ic" style="left:130px;top:1473px" width="15" height="15" ><use href="#iTb"/></svg><div class="t t2" style="left:151px;top:1464px">dps<s>_</s>worklist<s>_</s>approval</div>
<div style="left:850px;top:13px;width:1991px;height:1255px;background:#fff;border-radius:9px;box-shadow:0 1px 3px rgba(120,110,80,.45);overflow:hidden;border:1px solid #b7c7e8;border-top:none"><div style="left:-1px;top:0px;width:1991px;height:34px;background:linear-gradient(#dfe8f8 0%,#c2d4f0 45%,#bccff0 100%);border-bottom:1px solid #a9bde2"></div><div style="left:-1px;top:0px;width:194px;height:34px;background:#fff;border-radius:9px 9px 0 0;border:1px solid #b9c9e6;border-bottom:none"></div></div>
<svg class="ic" style="left:855px;top:24px" width="15" height="15" ><use href="#iDs"/></svg>
<div style="left:874px;top:17px;font-family:'Liberation Serif',serif;font-size:23.500px;letter-spacing:1.300px;line-height:30px;white-space:nowrap;color:#222">*pm.<span style="position:static;margin-left:5px">datasetx</span></div>
<svg class="ic" style="left:1026px;top:26px" width="11" height="11" ><use href="#iX"/></svg>
<svg class="ic" style="left:2794px;top:21px" width="11" height="5" ><use href="#iMin"/></svg>
<svg class="ic" style="left:2816px;top:21px" width="12" height="11" ><use href="#iMax"/></svg>
<div id="path" style="left:857px;top:48.500px;font-size:26.1px;line-height:34px;white-space:nowrap">devops-specs/com.primeton.devops.specs.model/src/com/primeton/devops/specs/model/pm.datasetx</div>
<div style="left:857px;top:80px;width:1978px;height:1px;background:#9a9a9a"></div>
<div style="left:857px;top:82px;width:126px;height:1146px;background:#fff"></div>
<div style="left:857px;top:82px;width:126px;height:38px;background:linear-gradient(#fafafa,#ededed)"></div>
<div style="left:857px;top:120px;width:126px;height:1px;background:#a8a8a8"></div>
<svg class="ic" style="left:873px;top:96px" width="7" height="11"><path d="M6.300.800L.9 5.500l5.400 4.700z" fill="#fff" stroke="#707070" stroke-width="1"/></svg>
<svg class="ic" style="left:900px;top:93px" width="15" height="16"><ellipse cx="7.500" cy="7.500" rx="7" ry="7" fill="#f3f0ea" stroke="#c9c2b4" stroke-width="1"/><circle cx="4.500" cy="5" r="1.600" fill="#f2a51d"/><circle cx="9.500" cy="3.800" r="1.600" fill="#58b64a"/><circle cx="11.800" cy="8" r="1.600" fill="#e04a3a"/><circle cx="8.500" cy="11.500" r="1.600" fill="#3d6fd6"/><circle cx="4" cy="10" r="1.400" fill="#fff" stroke="#bdb6a6" stroke-width=".6"/></svg>
<div class="t" style="left:919px;top:85px">Pal<span style="position:static;letter-spacing:-1.500px">...</span></div>
<div style="left:871px;top:124px;width:111px;height:34px;background:#cce0f8;border-radius:3px"></div>
<svg class="ic" style="left:877px;top:126px" width="11" height="17"><path d="M1 .800v12.500l3-2.800 2.200 5 2-.900-2.200-4.800h4z" fill="#fff" stroke="#555" stroke-width="1"/></svg>
<div class="t" style="left:892px;top:124.500px;font-size:24.800px">Select</div>
<div style="left:860px;top:163px;width:120px;height:1px;background:#b4b4b4"></div>
<svg class="ic" style="left:873px;top:169px" width="17" height="11"><path d="M0 5.500h12" stroke="#1c6cf0" stroke-width="1.400"/><path d="M10.500 1l5.500 4.500-5.500 4.500z" fill="#1c6cf0"/></svg>
<div class="t cj" style="left:891px;top:168px">单向<b style="font-size:25px;letter-spacing:-1px">1:1</b></div>
<div class="t cj" style="left:891px;top:200px">关联</div>
<svg class="ic" style="left:873px;top:238px" width="17" height="11"><path d="M0 5.500h12" stroke="#c322b5" stroke-width="1.400"/><path d="M10.500 1l5.500 4.500-5.500 4.500z" fill="#c322b5"/></svg>
<div class="t cj" style="left:891px;top:236px">单向<b style="font-size:25px;letter-spacing:-1px">1:n</b></div>
<div style="left:984px;top:82px;width:1px;height:1146px;background:#a0a0a0"></div>
<div style="left:1008px;top:82px;width:1px;height:1146px;background:#a0a0a0"></div>
<div style="left:1009px;top:106px;width:1px;height:1122px;background:#dedede"></div>
<div style="left:985px;top:105px;width:1816px;height:1px;background:#a0a0a0"></div>
<div style="left:985px;top:106px;width:1816px;height:1px;background:#dcdcdc"></div>
<div style="left:0;top:0;width:2801px;height:105px;overflow:hidden;clip-path:inset(82px 0 0 1009px)"><div class="rul" style="left:999px;top:80.500px;width:20px;text-align:center">0</div><div style="left:1033px;top:92px;width:1px;height:2px;background:#222"></div><div style="left:1057px;top:92px;width:1px;height:2px;background:#222"></div><div style="left:1081px;top:92px;width:1px;height:2px;background:#222"></div><div style="left:1105px;top:90px;width:1px;height:5px;background:#222"></div><div style="left:1129px;top:92px;width:1px;height:2px;background:#222"></div><div style="left:1153px;top:92px;width:1px;height:2px;background:#222"></div><div style="left:1177px;top:92px;width:1px;height:2px;background:#222"></div><div class="rul" style="left:1191px;top:80.500px;width:20px;text-align:center">1</div><div style="left:1225px;top:92px;width:1px;height:2px;background:#222"></div><div style="left:1249px;top:92px;width:1px;height:2px;background:#222"></div><div style="left:1273px;top:92px;width:1px;height:2px;background:#222"></div><div style="left:1297px;top:90px;width:1px;height:5px;background:#222"></div><div style="left:1321px;top:92px;width:1px;height:2px;background:#222"></div><div style="left:1345px;top:92px;width:1px;height:2px;background:#222"></div><div style="left:1369px;top:92px;width:1px;height:2px;background:#222"></div><div class="rul" style="left:1383px;top:80.500px;width:20px;text-align:center">2</div><div style="left:1417px;top:92px;width:1px;height:2px;background:#222"></div><div style="left:1441px;top:92px;width:1px;height:2px;background:#222"></div><div style="left:1465px;top:92px;width:1px;height:2px;background:#222"></div><div style="left:1489px;top:90px;width:1px;height:5px;background:#222"></div><div style="left:1513px;top:92px;width:1px;height:2px;background:#222"></div><div style="left:1537px;top:92px;width:1px;height:2px;background:#222"></div><div style="left:1561px;top:92px;width:1px;height:2px;background:#222"></div><div class="rul" style="left:1575px;top:80.500px;width:20px;text-align:center">3</div><div style="left:1609px;top:92px;width:1px;height:2px;background:#222"></div><div style="left:1633px;top:92px;width:1px;height:2px;background:#222"></div><div style="left:1657px;top:92px;width:1px;height:2px;background:#222"></div><div style="left:1681px;top:90px;width:1px;height:5px;background:#222"></div><div style="left:1705px;top:92px;width:1px;height:2px;background:#222"></div><div style="left:1729px;top:92px;width:1px;height:2px;background:#222"></div><div style="left:1753px;top:92px;width:1px;height:2px;background:#222"></div><div class="rul" style="left:1767px;top:80.500px;width:20px;text-align:center">4</div><div style="left:1801px;top:92px;width:1px;height:2px;background:#222"></div><div style="left:1825px;top:92px;width:1px;height:2px;background:#222"></div><div style="left:1849px;top:92px;width:1px;height:2px;background:#222"></div><div style="left:1873px;top:90px;width:1px;height:5px;background:#222"></div><div style="left:1897px;top:92px;width:1px;height:2px;background:#222"></div><div style="left:1921px;top:92px;width:1px;height:2px;background:#222"></div><div style="left:1945px;top:92px;width:1px;height:2px;background:#222"></div><div class="rul" style="left:1959px;top:80.500px;width:20px;text-align:center">5</div><div style="left:1993px;top:92px;width:1px;height:2px;background:#222"></div><div style="left:2017px;top:92px;width:1px;height:2px;background:#222"></div><div style="left:2041px;top:92px;width:1px;height:2px;background:#222"></div><div style="left:2065px;top:90px;width:1px;height:5px;background:#222"></div><div style="left:2089px;top:92px;width:1px;height:2px;background:#222"></div><div style="left:2113px;top:92px;width:1px;height:2px;background:#222"></div><div style="left:2137px;top:92px;width:1px;height:2px;background:#222"></div><div class="rul" style="left:2151px;top:80.500px;width:20px;text-align:center">6</div><div style="left:2185px;top:92px;width:1px;height:2px;background:#222"></div><div style="left:2209px;top:92px;width:1px;height:2px;background:#222"></div><div style="left:2233px;top:92px;width:1px;height:2px;background:#222"></div><div style="left:2257px;top:90px;width:1px;height:5px;background:#222"></div><div style="left:2281px;top:92px;width:1px;height:2px;background:#222"></div><div style="left:2305px;top:92px;width:1px;height:2px;background:#222"></div><div style="left:2329px;top:92px;width:1px;height:2px;background:#222"></div><div class="rul" style="left:2343px;top:80.500px;width:20px;text-align:center">7</div><div style="left:2377px;top:92px;width:1px;height:2px;background:#222"></div><div style="left:2401px;top:92px;width:1px;height:2px;background:#222"></div><div style="left:2425px;top:92px;width:1px;height:2px;background:#222"></div><div style="left:2449px;top:90px;width:1px;height:5px;background:#222"></div><div style="left:2473px;top:92px;width:1px;height:2px;background:#222"></div><div style="left:2497px;top:92px;width:1px;height:2px;background:#222"></div><div style="left:2521px;top:92px;width:1px;height:2px;background:#222"></div><div class="rul" style="left:2535px;top:80.500px;width:20px;text-align:center">8</div><div style="left:2569px;top:92px;width:1px;height:2px;background:#222"></div><div style="left:2593px;top:92px;width:1px;height:2px;background:#222"></div><div style="left:2617px;top:92px;width:1px;height:2px;background:#222"></div><div style="left:2641px;top:90px;width:1px;height:5px;background:#222"></div><div style="left:2665px;top:92px;width:1px;height:2px;background:#222"></div><div style="left:2689px;top:92px;width:1px;height:2px;background:#222"></div><div style="left:2713px;top:92px;width:1px;height:2px;background:#222"></div><div class="rul" style="left:2727px;top:80.500px;width:20px;text-align:center">9</div><div style="left:2761px;top:92px;width:1px;height:2px;background:#222"></div><div style="left:2785px;top:92px;width:1px;height:2px;background:#222"></div></div>
<div style="left:995px;top:129px;width:2px;height:1px;background:#222"></div>
<div style="left:995px;top:153px;width:2px;height:1px;background:#222"></div>
<div style="left:985px;top:163px;width:23px;height:28px;overflow:hidden"><div class="rul" style="left:6.500px;top:3px;width:22px;text-align:center;transform:rotate(-90deg);font-size:20.500px">8</div></div>
<div style="left:995px;top:201px;width:2px;height:1px;background:#222"></div>
<div style="left:995px;top:225px;width:2px;height:1px;background:#222"></div>
<div style="left:995px;top:249px;width:2px;height:1px;background:#222"></div>
<div style="left:1009px;top:106px;width:1792px;height:1121px;background:#fff;overflow:hidden"><div class="ent" style="left:75px;top:50px;width:150px;height:220px;"><div class="in"><div class="et" style="left:0;top:9px;width:148px;text-align:center"><span style="position:static;display:inline-block;vertical-align:middle;width:13px;height:12px;margin-right:8px;position:relative;top:-3px"><svg style="left:0;top:0" width="13" height="12"><use href="#iEn"/></svg></span>Phase</div><div class="dot" style="top:39px"></div><svg class="ic" style="left:3px;top:50px" width="15" height="14" ><use href="#iKey"/></svg><div class="et" style="left:22px;top:42px">phaseId &nbsp;...</div><svg class="ic" style="left:7px;top:85px" width="10" height="12" ><use href="#iAt"/></svg><div class="et" style="left:22px;top:75px">phaseNa...</div><svg class="ic" style="left:7px;top:118px" width="10" height="12" ><use href="#iAt"/></svg><div class="et" style="left:22px;top:108px">phaseDe...</div></div></div><div class="ent" style="left:270px;top:50px;width:150px;height:220px;"><div class="in"><div class="et" style="left:0;top:9px;width:148px;text-align:center"><span style="position:static;display:inline-block;vertical-align:middle;width:13px;height:12px;margin-right:8px;position:relative;top:-3px"><svg style="left:0;top:0" width="13" height="12"><use href="#iEn"/></svg></span>Milestone</div><div class="dot" style="top:39px"></div><svg class="ic" style="left:3px;top:50px" width="15" height="14" ><use href="#iKey"/></svg><div class="et" style="left:22px;top:42px">stoneId &nbsp;:...</div><svg class="ic" style="left:7px;top:85px" width="10" height="12" ><use href="#iAt"/></svg><div class="et" style="left:22px;top:75px">stoneNa...</div><svg class="ic" style="left:7px;top:118px" width="10" height="12" ><use href="#iAt"/></svg><div class="et" style="left:22px;top:108px">stoneDe...</div></div></div><div class="ent" style="left:517px;top:50px;width:150px;height:220px;"><div class="in"><div class="et" style="left:0;top:9px;width:148px;text-align:center"><span style="position:static;display:inline-block;vertical-align:middle;width:13px;height:12px;margin-right:8px;position:relative;top:-3px"><svg style="left:0;top:0" width="13" height="12"><use href="#iEn"/></svg></span>Delivera...</div><div class="dot" style="top:39px"></div><svg class="ic" style="left:3px;top:50px" width="15" height="14" ><use href="#iKey"/></svg><div class="et" style="left:22px;top:42px">deliverab...</div><svg class="ic" style="left:7px;top:85px" width="10" height="12" ><use href="#iAt"/></svg><div class="et" style="left:22px;top:75px">deliverab...</div><svg class="ic" style="left:7px;top:118px" width="10" height="12" ><use href="#iAt"/></svg><div class="et" style="left:22px;top:108px">deliverab...</div></div></div><div class="ent" style="left:1110px;top:5px;width:150px;height:1169px;outline:1px solid #000;"><div class="in"><div class="et" style="left:0;top:9px;width:148px;text-align:center"><span style="position:static;display:inline-block;vertical-align:middle;width:13px;height:12px;margin-right:8px;position:relative;top:-3px"><svg style="left:0;top:0" width="13" height="12"><use href="#iEn"/></svg></span>Workitem</div><div class="dot" style="top:39px"></div><svg class="ic" style="left:3px;top:50px" width="15" height="14" ><use href="#iKey"/></svg><div class="et" style="left:22px;top:42px">workite...</div><svg class="ic" style="left:7px;top:85px" width="10" height="12" ><use href="#iAt"/></svg><div class="et" style="left:22px;top:75px">projectId...</div><svg class="ic" style="left:7px;top:118px" width="10" height="12" ><use href="#iAt"/></svg><div class="et" style="left:22px;top:108px">iterationI...</div><svg class="ic" style="left:7px;top:151px" width="10" height="12" ><use href="#iAt"/></svg><div class="et" style="left:22px;top:141px">versionId...</div><svg class="ic" style="left:7px;top:184px" width="10" height="12" ><use href="#iAt"/></svg><div class="et" style="left:22px;top:174px">moduleI...</div><svg class="ic" style="left:7px;top:217px" width="10" height="12" ><use href="#iAt"/></svg><div class="et" style="left:22px;top:207px">workite...</div><svg class="ic" style="left:7px;top:250px" width="10" height="12" ><use href="#iAt"/></svg><div class="et" style="left:22px;top:240px">workite...</div><svg class="ic" style="left:7px;top:283px" width="10" height="12" ><use href="#iAt"/></svg><div class="et" style="left:22px;top:273px">parentW...</div><svg class="ic" style="left:7px;top:316px" width="10" height="12" ><use href="#iAt"/></svg><div class="et" style="left:22px;top:306px">title &nbsp;:Stri...</div><svg class="ic" style="left:7px;top:349px" width="10" height="12" ><use href="#iAt"/></svg><div class="et" style="left:22px;top:339px">descripti...</div><svg class="ic" style="left:7px;top:382px" width="10" height="12" ><use href="#iAt"/></svg><div class="et" style="left:22px;top:372px">priority &nbsp;:...</div><svg class="ic" style="left:7px;top:415px" width="10" height="12" ><use href="#iAt"/></svg><div class="et" style="left:22px;top:405px">workite...</div><svg class="ic" style="left:7px;top:448px" width="10" height="12" ><use href="#iAt"/></svg><div class="et" style="left:22px;top:438px">assignee ...</div><svg class="ic" style="left:7px;top:481px" width="10" height="12" ><use href="#iAt"/></svg><div class="et" style="left:22px;top:471px">resolutio...</div><svg class="ic" style="left:7px;top:514px" width="10" height="12" ><use href="#iAt"/></svg><div class="et" style="left:22px;top:504px">dueTime...</div><svg class="ic" style="left:7px;top:547px" width="10" height="12" ><use href="#iAt"/></svg><div class="et" style="left:22px;top:537px">timeEsti...</div><svg class="ic" style="left:7px;top:580px" width="10" height="12" ><use href="#iAt"/></svg><div class="et" style="left:22px;top:570px">timeSpe...</div><svg class="ic" style="left:7px;top:613px" width="10" height="12" ><use href="#iAt"/></svg><div class="et" style="left:22px;top:603px">storyDeg...</div><svg class="ic" style="left:7px;top:646px" width="10" height="12" ><use href="#iAt"/></svg><div class="et" style="left:22px;top:636px">bugLevel...</div><svg class="ic" style="left:7px;top:679px" width="10" height="12" ><use href="#iAt"/></svg><div class="et" style="left:22px;top:669px">resolver &nbsp;...</div><svg class="ic" style="left:7px;top:712px" width="10" height="12" ><use href="#iAt"/></svg><div class="et" style="left:22px;top:702px">delFlag &nbsp;:...</div><svg class="ic" style="left:7px;top:745px" width="10" height="12" ><use href="#iAt"/></svg><div class="et" style="left:22px;top:735px">createUs...</div><svg class="ic" style="left:7px;top:778px" width="10" height="12" ><use href="#iAt"/></svg><div class="et" style="left:22px;top:768px">createTi...</div><svg class="ic" style="left:7px;top:811px" width="10" height="12" ><use href="#iAt"/></svg><div class="et" style="left:22px;top:801px">updateU...</div><svg class="ic" style="left:7px;top:844px" width="10" height="12" ><use href="#iAt"/></svg><div class="et" style="left:22px;top:834px">updateTi...</div><svg class="ic" style="left:7px;top:877px" width="10" height="12" ><use href="#iAt"/></svg><div class="et" style="left:22px;top:867px">extend &nbsp;:...</div><svg class="ic" style="left:7px;top:910px" width="10" height="12" ><use href="#iAt"/></svg><div class="et" style="left:22px;top:900px">ext1 &nbsp;:Str...</div><svg class="ic" style="left:7px;top:943px" width="10" height="12" ><use href="#iAt"/></svg><div class="et" style="left:22px;top:933px">ext2 &nbsp;:Str...</div><svg class="ic" style="left:7px;top:976px" width="10" height="12" ><use href="#iAt"/></svg><div class="et" style="left:22px;top:966px">ext3 &nbsp;:Str...</div><svg class="ic" style="left:7px;top:1009px" width="10" height="12" ><use href="#iAt"/></svg><div class="et" style="left:22px;top:999px">ext4 &nbsp;:Str...</div><svg class="ic" style="left:7px;top:1042px" width="10" height="12" ><use href="#iAt"/></svg><div class="et" style="left:22px;top:1032px">ext5 &nbsp;:Str...</div><svg class="ic" style="left:7px;top:1075px" width="10" height="12" ><use href="#iAt"/></svg><div class="et" style="left:22px;top:1065px">ext6 &nbsp;:Str...</div><svg class="ic" style="left:7px;top:1108px" width="10" height="12" ><use href="#iAt"/></svg><div class="et" style="left:22px;top:1098px">ext7 &nbsp;:Str...</div><svg class="ic" style="left:7px;top:1141px" width="10" height="12" ><use href="#iAt"/></svg><div class="et" style="left:22px;top:1131px">ext8 &nbsp;:Str...</div></div></div><div style="left:1107px;top:3px;width:5px;height:5px;background:#000"></div><div style="left:1183px;top:3px;width:5px;height:5px;background:#000"></div><div style="left:1258px;top:3px;width:5px;height:5px;background:#000"></div><div style="left:1258px;top:587px;width:5px;height:5px;background:#000"></div><div class="ent" style="left:1560px;top:5px;width:150px;height:174px;"><div class="in"><div class="et" style="left:0;top:9px;width:148px;text-align:center"><span style="position:static;display:inline-block;vertical-align:middle;width:13px;height:12px;margin-right:8px;position:relative;top:-3px"><svg style="left:0;top:0" width="13" height="12"><use href="#iEn"/></svg></span>Workite...</div><div class="dot" style="top:39px"></div><svg class="ic" style="left:3px;top:50px" width="15" height="14" ><use href="#iKey"/></svg><div class="et" style="left:22px;top:42px">workite...</div><svg class="ic" style="left:3px;top:83px" width="15" height="14" ><use href="#iKey"/></svg><div class="et" style="left:22px;top:75px">workite...</div><svg class="ic" style="left:7px;top:118px" width="10" height="12" ><use href="#iAt"/></svg><div class="et" style="left:22px;top:108px">workite...</div><svg class="ic" style="left:7px;top:151px" width="10" height="12" ><use href="#iAt"/></svg><div class="et" style="left:22px;top:141px">sortno &nbsp;:...</div></div></div><div class="ent" style="left:1770px;top:5px;width:150px;height:210px;"><div class="in"><div class="et" style="left:0;top:9px;width:148px;text-align:center"><span style="position:static;display:inline-block;vertical-align:middle;width:13px;height:12px;margin-right:8px;position:relative;top:-3px"><svg style="left:0;top:0" width="13" height="12"><use href="#iEn"/></svg></span>Workite...</div><div class="dot" style="top:39px"></div><svg class="ic" style="left:3px;top:50px" width="15" height="14" ><use href="#iKey"/></svg><div class="et" style="left:22px;top:42px">workite...</div><svg class="ic" style="left:3px;top:83px" width="15" height="14" ><use href="#iKey"/></svg><div class="et" style="left:22px;top:75px">workite...</div><svg class="ic" style="left:3px;top:116px" width="15" height="14" ><use href="#iKey"/></svg><div class="et" style="left:22px;top:108px">workite...</div><svg class="ic" style="left:7px;top:151px" width="10" height="12" ><use href="#iAt"/></svg><div class="et" style="left:22px;top:141px">sortno &nbsp;:...</div><svg class="ic" style="left:7px;top:184px" width="10" height="12" ><use href="#iAt"/></svg><div class="et" style="left:22px;top:174px">status &nbsp;:...</div></div></div><div class="ent" style="left:1650px;top:650px;width:150px;height:337px;"><div class="in"><div class="et" style="left:0;top:9px;width:148px;text-align:center"><span style="position:static;display:inline-block;vertical-align:middle;width:13px;height:12px;margin-right:8px;position:relative;top:-3px"><svg style="left:0;top:0" width="13" height="12"><use href="#iEn"/></svg></span>Meeting...</div><div class="dot" style="top:39px"></div><svg class="ic" style="left:3px;top:50px" width="15" height="14" ><use href="#iKey"/></svg><div class="et" style="left:22px;top:42px">meetingI...</div><svg class="ic" style="left:7px;top:85px" width="10" height="12" ><use href="#iAt"/></svg><div class="et" style="left:22px;top:75px">projectId...</div><svg class="ic" style="left:7px;top:118px" width="10" height="12" ><use href="#iAt"/></svg><div class="et" style="left:22px;top:108px">meeting...</div><svg class="ic" style="left:7px;top:151px" width="10" height="12" ><use href="#iAt"/></svg><div class="et" style="left:22px;top:141px">meeting...</div><svg class="ic" style="left:7px;top:184px" width="10" height="12" ><use href="#iAt"/></svg><div class="et" style="left:22px;top:174px">meeting...</div><svg class="ic" style="left:7px;top:217px" width="10" height="12" ><use href="#iAt"/></svg><div class="et" style="left:22px;top:207px">meeting...</div><svg class="ic" style="left:7px;top:250px" width="10" height="12" ><use href="#iAt"/></svg><div class="et" style="left:22px;top:240px">meeting...</div><svg class="ic" style="left:7px;top:283px" width="10" height="12" ><use href="#iAt"/></svg><div class="et" style="left:22px;top:273px">meeting...</div><svg class="ic" style="left:7px;top:316px" width="10" height="12" ><use href="#iAt"/></svg><div class="et" style="left:22px;top:306px">meeting...</div></div></div></div>
<div style="left:2801px;top:106px;width:34px;height:1122px;background:#f0f0f0"></div>
<div style="left:2809px;top:655px;width:19px;height:394px;background:#868686"></div>
<div style="left:985px;top:1228px;width:1850px;height:33px;background:#f0f0f0"></div>
<div style="left:2000px;top:1235px;width:555px;height:19px;background:#868686"></div>
<div class="panel" style="left:850px;top:1276px;width:1991px;height:268px;"></div>
<div style="left:857px;top:1343px;width:1978px;height:1px;background:#a0a0a0"></div>
<svg class="ic" style="left:2662px;top:1282px" width="15" height="15"><rect x=".5" y="5.500" width="11" height="9" fill="#f4f4f4" stroke="#b5b5b5"/><path d="M.5 8h11" stroke="#c9c9d9" stroke-width="1.500"/><path d="M8 7l6-6M11 0l3 3" stroke="#a0a0a0" stroke-width="1.500"/></svg>
<svg class="ic" style="left:2686px;top:1281px" width="14" height="15"><rect x=".5" y=".5" width="13" height="10" fill="#a6a6a6" stroke="#9a9a9a"/><rect x="2" y="2" width="10" height="7" fill="#ececec"/><path d="M3.500 4.500h7M3.500 6.500h5" stroke="#9a9a9a" stroke-width="1"/><path d="M5 11v2.500M9 11v2.500M2 14h10" stroke="#9a9a9a" stroke-width="1.200"/></svg>
<svg class="ic" style="left:2711px;top:1285px" width="14" height="8"><path d="M0 0h14L7 8z" fill="#707075"/></svg>
<svg class="ic" style="left:2738px;top:1281px" width="17" height="16"><rect x=".5" y="3.500" width="13" height="12" fill="#fff" stroke="#9a8f6a"/><rect x="1" y="4" width="12" height="2.500" fill="#3d7fd0"/><path d="M12 0v7M8.500 3.500h7M9.800 1.200l4.500 4.500M14.300 1.200L9.800 5.700" stroke="#d8a81e" stroke-width="1"/></svg>
<svg class="ic" style="left:2765px;top:1285px" width="14" height="8"><path d="M0 0h14L7 8z" fill="#262626"/></svg>
<svg class="ic" style="left:2794px;top:1284px" width="11" height="5" ><use href="#iMin"/></svg>
<svg class="ic" style="left:2816px;top:1284px" width="12" height="11" ><use href="#iMax"/></svg>
<div style="left:2847px;top:14px;width:40px;height:58px;background:#f4f5fb;border:1px solid #b9c6e8;border-radius:9px"></div>
<svg class="ic" style="left:2855px;top:19px" width="20" height="3"><path d="M0 1h20" stroke="#9a9a9a" stroke-width="1.200" stroke-dasharray="2 2"/></svg>
<svg class="ic" style="left:2858px;top:30px" width="10" height="9"><rect x="2.500" y=".5" width="7" height="5" fill="#fff" stroke="#555"/><rect x=".5" y="3.500" width="7" height="5" fill="#fff" stroke="#555"/><path d="M.5 4.500h7" stroke="#555" stroke-width="1.500"/></svg>
<svg class="ic" style="left:2855px;top:48px" width="17" height="16"><path d="M3 9c0-5 2-8 5.500-8S14 4 14 9z" fill="#f4dca0" stroke="#6e8fc8" stroke-width="1"/><rect x="1" y="9" width="10" height="3" fill="#2e8f7a"/><rect x="0" y="12" width="12" height="3" fill="#d0522a"/><rect x="9.500" y="6.500" width="6.500" height="8.500" fill="#fff" stroke="#7a93c8" stroke-width=".9"/><path d="M11 10h3.500M11 12.500h3.500" stroke="#3b5bb5" stroke-width=".9"/></svg>
<div style="left:361px;top:271px;width:1798px;height:1144px;background:#f0f0f0;border-radius:15px;overflow:hidden;box-shadow:0 0 0 1px #b2b2b2,0 36px 80px rgba(0,0,0,.22),0 2px 24px rgba(0,0,0,.11)"><div style="left:0px;top:0px;width:1798px;height:57px;background:#f3f3f3"></div><svg class="ic" style="left:13.5px;top:11px" width="32" height="33" ><use href="#iLogo"/></svg><div class="cj" style="left:51px;top:12px;line-height:32px;color:#8e8e8e">持久化实体属性设置</div><svg class="ic" style="left:1755px;top:18px" width="21" height="21"><path d="M.7.700l19.600 19.600M20.300.700L.7 20.300" stroke="#8a8a8a" stroke-width="1.500"/></svg><div style="left:0px;top:57px;width:1798px;height:130px;background:#fff"></div><div style="left:1709px;top:57px;width:89px;height:66px;background:radial-gradient(ellipse 80px 70px at 100% 100%,#d6dff6 0%,#e2e9fa 50%,rgba(255,255,255,0) 100%)"></div><div style="left:13px;top:77px;font-weight:bold;font-size:27.9px;line-height:34px;white-space:nowrap">Workitem</div><div class="cj" style="left:21px;top:126px;line-height:34px">设置<b style="font-size:27px">&lt;Workitem&gt;</b>属性信息</div><div style="left:0px;top:187px;width:1798px;height:960px;background:#f0f0f0"></div><div style="left:0px;top:188px;width:1798px;height:861px;border-top:1px solid #a0a0a0;border-radius:8px 8px 0 0;background:#f0f0f0"></div><svg class="ic" style="left:1789px;top:188px" width="9" height="9"><path d="M0 .5h2c4 0 6.500 2.500 6.500 6.500v2" fill="none" stroke="#a0a0a0"/></svg><div style="left:0px;top:216px;width:1798px;height:1px;background:#a0a0a0"></div><div style="left:0px;top:217px;width:1798px;height:3px;background:#fff"></div><div style="left:0px;top:217px;width:2.5px;height:830px;background:#fff"></div><div style="left:1795.5px;top:217px;width:2.5px;height:830px;background:#fff"></div><div style="left:0px;top:1046px;width:1798px;height:2px;background:#fff"></div><svg class="ic" style="left:0px;top:187px" width="180" height="34"><path d="M.5 33V7c0-3.500 2-5.500 5.500-5.500h52c9 0 13 5 18 11l9 10c4.500 4.500 8 5.500 14 5.500h4v5z" fill="#fff"/><path d="M.5 33V7c0-3.500 2-5.500 5.500-5.500h52c9 0 13 5 18 11l9 10c4.500 4.500 8 5.500 14 5.500" fill="none" stroke="#a0a0a0" stroke-width="1"/><path d="M160 1.500c3 0 5 2 5 5v22.500" fill="none" stroke="#a0a0a0" stroke-width="1"/></svg><svg class="ic" style="left:6px;top:197px" width="14" height="12"><rect x=".5" y=".5" width="12.500" height="11" fill="#fffbe8" stroke="#b98a3a"/><rect x="1" y="1" width="11.500" height="2.200" fill="#f0a030"/><path d="M1 5.800h12M1 8.600h12M5 3.300v8M9 3.300v8" stroke="#d9b46a" stroke-width=".9"/></svg><div class="ser" style="left:25px;top:189.5px;letter-spacing:0">属性</div><svg class="ic" style="left:94px;top:196px" width="16" height="15"><rect x="2.500" y=".5" width="12" height="10.500" fill="#fff" stroke="#7f9bd6"/><rect x="3" y="1" width="11" height="2.300" fill="#5a8ae0"/><path d="M5 5.500h2M8 5.500h2M11 5.500h2M5 8h5" stroke="#5d7fd0" stroke-width="1"/><path d="M1 9.500l2-2 2.500 2.500-2 2z" fill="#3a6fd0"/><path d="M4 12l2-1.800 2 2.300-2 1.800z" fill="#d957c0"/><path d="M9 9.500l2.500-2 1.500 1.500-2.500 2z" fill="#e8b820"/></svg><div class="ser" style="left:115px;top:189.5px">描述</div><div class="cj" style="left:18px;top:240px;line-height:34px">实体名称:*</div><div style="left:145px;top:239px;width:813px;height:36px;background:#fff;border-bottom:1px solid #868686;border-radius:3px 3px 0 0"><div class="t" style="left:4px;top:0;line-height:36px;height:36px"><span style="position:static;font-size:26.3px">Workitem</span></div></div><div class="cj" style="left:18px;top:284px;line-height:34px">表:*</div><div style="left:145px;top:283px;width:813px;height:36px;background:#fff;border-bottom:1px solid #868686;border-radius:3px 3px 0 0"><div class="t" style="left:4px;top:0;line-height:36px;height:36px">dps<s>_</s>workitem</div></div><div class="t" style="left:965px;top:240px;font-size:24.700px">Schema:</div><div style="left:1129px;top:239px;width:656px;height:36px;background:#fff;border-bottom:1px solid #868686;border-radius:3px 3px 0 0"></div><div class="cj" style="left:965px;top:284px;line-height:34px">主键生成策略:</div><div style="left:1128px;top:282px;width:657px;height:38px;background:#fbfbfb;border:1px solid #dcdcdc;border-bottom-color:#c8c8c8;border-radius:5px"><div class="cj" style="left:3px;top:0;line-height:36px">用户自定义</div><svg class="ic" style="left:633px;top:15px" width="15" height="9"><path d="M.8.800l6.700 6.700L14.200.800" fill="none" stroke="#444" stroke-width="1.400"/></svg></div><div style="left:144px;top:328px;width:26px;height:26px;background:#0f60bc;border-radius:5px"><svg class="ic" style="left:5px;top:7px" width="16" height="12"><path d="M1.500 6l4.500 4.500L14.500 1.500" fill="none" stroke="#fff" stroke-width="1.800"/></svg></div><div class="cj" style="left:177px;top:325px;line-height:34px">允许运行时动态增加<b>Property</b></div><div style="left:1128px;top:328px;width:26px;height:26px;background:#f7f7f7;border:1.500px solid #7c7c7c;border-radius:6px"></div><div class="cj" style="left:1161px;top:325px;line-height:34px">乐观锁</div><div class="cj" style="left:14px;top:366px;line-height:34px">属性列表</div><svg class="ic" style="left:1530px;top:373px" width="17" height="16"><g fill="none" stroke="#a9a9a9" stroke-width="1.100"><rect x=".6" y="8" width="3.400" height="7"/><rect x="5.600" y="6" width="3.400" height="9"/><circle cx="11" cy="5" r="3.800"/><circle cx="11" cy="5" r="1.500"/><path d="M11 .2v1.500M11 8.300v1.500M6.200 5h1.500M14.300 5h1.500M1 5l3-3M12 13l3-2"/></g></svg><svg class="ic" style="left:1553px;top:373px" width="17" height="17"><rect x="0" y="5" width="4" height="3" fill="#000"/><rect x="1" y="6" width="2" height="1" fill="#7fd35a"/><rect x="0" y="9" width="4" height="3" fill="#000"/><rect x="1" y="10" width="2" height="1" fill="#7fd35a"/><rect x="0" y="13" width="4" height="3" fill="#000"/><rect x="1" y="14" width="2" height="1" fill="#7fd35a"/><path d="M5.500 7.500h3.500M5.500 11.500h3.500M5.500 15.500h3.500" stroke="#000" stroke-width="1"/><path d="M10.2 0h3v3.200h3.200v3h-3.200v3.200h-3v-3.200H7v-3h3.200z" fill="url(#gPlus)" stroke="#5b9a3a" stroke-width=".7"/></svg><svg class="ic" style="left:1576px;top:373px" width="17" height="17"><rect x=".5" y="7" width="10" height="9.500" fill="#fff8e0" stroke="#9b7a3c"/><rect x="1" y="7.500" width="9" height="2.400" fill="url(#gOr)"/><path d="M1 12h9M1 14.300h9M4 10v6.500M7 10v6.500" stroke="#c9a35c" stroke-width=".8"/><path d="M10.2 0h3v3.200h3.200v3h-3.200v3.200h-3v-3.200H7v-3h3.200z" fill="url(#gPlus)" stroke="#5b9a3a" stroke-width=".7"/></svg><svg class="ic" style="left:1599px;top:375px" width="17" height="13"><rect x="0" y="0" width="4" height="3" fill="#000"/><rect x="1" y="1" width="2" height="1" fill="#7fd35a"/><rect x="0" y="5" width="4" height="3" fill="#000"/><rect x="1" y="6" width="2" height="1" fill="#3a8fe8"/><rect x="0" y="10" width="4" height="3" fill="#000"/><rect x="1" y="11" width="2" height="1" fill="#7fd35a"/><path d="M5.500 2.500h3M5.500 12.500h3" stroke="#000" stroke-width="1"/><path d="M5.5 6.3l4.500-4v2.200h5.500c1 0 1.500.8 1.500 1.800s-.5 1.800-1.500 1.800h-5.500v2.200z" fill="url(#gArr)" stroke="#c9901c" stroke-width=".9" stroke-linejoin="round"/></svg><svg class="ic" style="left:1622px;top:376px" width="17" height="11"><rect x=".5" y=".5" width="9" height="9.500" fill="#fff8e0" stroke="#c98a2c"/><rect x="1" y="1" width="8" height="2.400" fill="url(#gOr)"/><rect x="1" y="4.200" width="8" height="3" fill="#3d9ae0"/><path d="M1 7.600h8" stroke="#d9a85c" stroke-width=".8"/><path d="M5.5 5.0l4.500-4v2.200h5.500c1 0 1.500.8 1.500 1.800s-.5 1.800-1.500 1.800h-5.500v2.200z" fill="url(#gArr)" stroke="#c9901c" stroke-width=".9" stroke-linejoin="round"/></svg><svg class="ic" style="left:1663px;top:374px" width="13" height="14"><path d="M6.500.700L12.300 7H9v6.300H4V7H.7z" fill="#f6f6f6" stroke="#a8a8a8" stroke-width="1"/></svg><svg class="ic" style="left:1683px;top:374px" width="14" height="14"><path d="M4.500 3L8.300 7.500H6.300V13H2.700V7.500H.7z" fill="#f6f6f6" stroke="#a8a8a8" stroke-width="1"/><path d="M3 .500h3M12.500 0v10" stroke="#b0b0b0" stroke-width="1"/></svg><svg class="ic" style="left:1704px;top:374px" width="13" height="14"><path d="M6.500 13.300L12.300 7H9V.700H4V7H.7z" fill="#f6f6f6" stroke="#a8a8a8" stroke-width="1"/></svg><svg class="ic" style="left:1725px;top:374px" width="14" height="15"><path d="M4.500 11L8.300 6.500H6.300V1H2.700v5.500H.7z" fill="#f6f6f6" stroke="#a8a8a8" stroke-width="1"/><path d="M3 13.500h3M12 4v10" stroke="#b0b0b0" stroke-width="1"/></svg><svg class="ic" style="left:1765px;top:375px" width="11" height="12"><path d="M1.500 1.500l8 9M9.500 1.500l-8 9" stroke="#a0a0a0" stroke-width="3"/></svg><div style="left:13px;top:398px;width:1772px;height:638px;background:#fff;border:1px solid #a8a8a8;overflow:hidden"><div style="left:-1px;top:-1px;width:1px;height:1px"><div style="left:3px;top:2px;width:1732px;height:19px;background:#f0f0f0"></div><div style="left:423px;top:402px;width:159px;height:199px;background:#ffff80"></div><div class="hl" style="left:3px;top:21px;width:1732px;height:1px;"></div><div class="hl" style="left:3px;top:41px;width:1732px;height:1px;"></div><div class="hl" style="left:3px;top:61px;width:1732px;height:1px;"></div><div class="hl" style="left:3px;top:81px;width:1732px;height:1px;"></div><div class="hl" style="left:3px;top:101px;width:1732px;height:1px;"></div><div class="hl" style="left:3px;top:121px;width:1732px;height:1px;"></div><div class="hl" style="left:3px;top:141px;width:1732px;height:1px;"></div><div class="hl" style="left:3px;top:161px;width:1732px;height:1px;"></div><div class="hl" style="left:3px;top:181px;width:1732px;height:1px;"></div><div class="hl" style="left:3px;top:201px;width:1732px;height:1px;"></div><div class="hl" style="left:3px;top:221px;width:1732px;height:1px;"></div><div class="hl" style="left:3px;top:241px;width:1732px;height:1px;"></div><div class="hl" style="left:3px;top:261px;width:1732px;height:1px;"></div><div class="hl" style="left:3px;top:281px;width:1732px;height:1px;"></div><div class="hl" style="left:3px;top:301px;width:1732px;height:1px;"></div><div class="hl" style="left:3px;top:321px;width:1732px;height:1px;"></div><div class="hl" style="left:3px;top:341px;width:1732px;height:1px;"></div><div class="hl" style="left:3px;top:361px;width:1732px;height:1px;"></div><div class="hl" style="left:3px;top:381px;width:1732px;height:1px;"></div><div class="hl" style="left:3px;top:401px;width:1732px;height:1px;"></div><div class="hl" style="left:3px;top:421px;width:1732px;height:1px;"></div><div class="hl" style="left:3px;top:441px;width:1732px;height:1px;"></div><div class="hl" style="left:3px;top:461px;width:1732px;height:1px;"></div><div class="hl" style="left:3px;top:481px;width:1732px;height:1px;"></div><div class="hl" style="left:3px;top:501px;width:1732px;height:1px;"></div><div class="hl" style="left:3px;top:521px;width:1732px;height:1px;"></div><div class="hl" style="left:3px;top:541px;width:1732px;height:1px;"></div><div class="hl" style="left:3px;top:561px;width:1732px;height:1px;"></div><div class="hl" style="left:3px;top:581px;width:1732px;height:1px;"></div><div class="hl" style="left:3px;top:601px;width:1732px;height:1px;"></div><div class="vl" style="left:22px;top:2px;width:1px;height:599px;"></div><div class="vl" style="left:102px;top:2px;width:1px;height:599px;"></div><div class="vl" style="left:202px;top:2px;width:1px;height:599px;"></div><div class="vl" style="left:302px;top:2px;width:1px;height:599px;"></div><div class="vl" style="left:362px;top:2px;width:1px;height:599px;"></div><div class="vl" style="left:422px;top:2px;width:1px;height:599px;"></div><div class="vl" style="left:502px;top:2px;width:1px;height:599px;"></div><div class="vl" style="left:582px;top:2px;width:1px;height:599px;"></div><div class="vl" style="left:612px;top:2px;width:1px;height:599px;"></div><div class="vl" style="left:642px;top:2px;width:1px;height:599px;"></div><div class="vl" style="left:672px;top:2px;width:1px;height:599px;"></div><div style="left:2px;top:1px;width:1733px;height:1px;background:#6e6e6e"></div><div style="left:2px;top:1px;width:1px;height:635px;background:#6e6e6e"></div><div style="left:1734px;top:1px;width:2px;height:635px;background:#707070"></div><div class="c" style="left:26px;top:4px;width:75px"><span class="z">名称</span></div><div class="c" style="left:106px;top:4px;width:95px"><span class="z">显示名<i>...</i></span></div><div class="c" style="left:206px;top:4px;width:95px"><span class="z">数据类<i>...</i></span></div><div class="c" style="left:306px;top:4px;width:55px"><span class="z">是<i>...</i></span></div><div class="c" style="left:366px;top:4px;width:55px"><span class="z">持<i>...</i></span></div><div class="c" style="left:426px;top:4px;width:75px"><span class="z">列</span></div><div class="c" style="left:506px;top:4px;width:75px"><span class="z">列类型</span></div><div class="c" style="left:586px;top:4px;width:25px"><span>P</span></div><div class="c" style="left:616px;top:4px;width:25px"><span>F</span></div><div class="c" style="left:646px;top:4px;width:25px"><span><i>...</i></span></div><div class="c" style="left:676px;top:4px;width:1058px"><span class="z">描述</span></div><svg class="ic" style="left:10px;top:27px" width="9" height="11" ><use href="#iAt"/></svg><div class="c" style="left:26px;top:24.5px;width:75px"><span>ext9</span></div><div class="c" style="left:106px;top:24.5px;width:95px"><span class="z">扩展字<i>...</i></span></div><div class="c" style="left:206px;top:24.5px;width:95px"><span>String</span></div><div class="c" style="left:426px;top:24.5px;width:75px"><span style="font-size:24.300px">EXT9</span></div><div class="c" style="left:506px;top:24.5px;width:75px"><span>VAR<i>...</i></span></div><div class="c" style="left:676px;top:24.5px;width:1058px"><span class="z">扩展字段9</span></div><svg class="ic ck" style="left:386.0px;top:26.5px" width="12" height="10"><path d="M1.200 5.200l3 3.200L10.800 1.500" fill="none" stroke="#000" stroke-width="2"/></svg><svg class="ic" style="left:10px;top:47px" width="9" height="11" ><use href="#iAt"/></svg><div class="c" style="left:26px;top:44.5px;width:75px"><span>ext10</span></div><div class="c" style="left:106px;top:44.5px;width:95px"><span class="z">扩展字<i>...</i></span></div><div class="c" style="left:206px;top:44.5px;width:95px"><span>String</span></div><div class="c" style="left:426px;top:44.5px;width:75px"><span style="font-size:24.300px">EXT10</span></div><div class="c" style="left:506px;top:44.5px;width:75px"><span>VAR<i>...</i></span></div><div class="c" style="left:676px;top:44.5px;width:1058px"><span class="z">扩展字段10</span></div><svg class="ic ck" style="left:386.0px;top:46.5px" width="12" height="10"><path d="M1.200 5.200l3 3.200L10.800 1.500" fill="none" stroke="#000" stroke-width="2"/></svg><svg class="ic" style="left:10px;top:67px" width="9" height="11" ><use href="#iAt"/></svg><div class="c" style="left:26px;top:64.5px;width:75px"><span>env<i>...</i></span></div><div class="c" style="left:106px;top:64.5px;width:95px"><span class="z">环境类<i>...</i></span></div><div class="c" style="left:206px;top:64.5px;width:95px"><span>String</span></div><div class="c" style="left:426px;top:64.5px;width:75px"><span style="font-size:24.300px">ENV<i>...</i></span></div><div class="c" style="left:506px;top:64.5px;width:75px"><span>VAR<i>...</i></span></div><div class="c" style="left:676px;top:64.5px;width:1058px"><span class="z">环境类型</span></div><svg class="ic ck" style="left:386.0px;top:66.5px" width="12" height="10"><path d="M1.200 5.200l3 3.200L10.800 1.500" fill="none" stroke="#000" stroke-width="2"/></svg><svg class="ic" style="left:10px;top:87px" width="9" height="11" ><use href="#iAt"/></svg><div class="c" style="left:26px;top:84.5px;width:75px"><span>env<i>...</i></span></div><div class="c" style="left:106px;top:84.5px;width:95px"><span class="z">环境描<i>...</i></span></div><div class="c" style="left:206px;top:84.5px;width:95px"><span>String</span></div><div class="c" style="left:426px;top:84.5px;width:75px"><span style="font-size:24.300px">ENV<i>...</i></span></div><div class="c" style="left:506px;top:84.5px;width:75px"><span>TEXT</span></div><div class="c" style="left:676px;top:84.5px;width:1058px"><span class="z">环境描述</span></div><svg class="ic ck" style="left:386.0px;top:86.5px" width="12" height="10"><path d="M1.200 5.200l3 3.200L10.800 1.500" fill="none" stroke="#000" stroke-width="2"/></svg><svg class="ic" style="left:10px;top:107px" width="9" height="11" ><use href="#iAt"/></svg><div class="c" style="left:26px;top:104.5px;width:75px"><span>affe<i>...</i></span></div><div class="c" style="left:106px;top:104.5px;width:95px"><span class="z">影响版<i>...</i></span></div><div class="c" style="left:206px;top:104.5px;width:95px"><span>String</span></div><div class="c" style="left:426px;top:104.5px;width:75px"><span style="font-size:24.300px">AFF<i>...</i></span></div><div class="c" style="left:506px;top:104.5px;width:75px"><span>VAR<i>...</i></span></div><div class="c" style="left:676px;top:104.5px;width:1058px"><span class="z">影响版本ID列表<em>，</em>逗号分隔</span></div><svg class="ic ck" style="left:386.0px;top:106.5px" width="12" height="10"><path d="M1.200 5.200l3 3.200L10.800 1.500" fill="none" stroke="#000" stroke-width="2"/></svg><svg class="ic" style="left:10px;top:127px" width="9" height="11" ><use href="#iAt"/></svg><div class="c" style="left:26px;top:124.5px;width:75px"><span>task<i>...</i></span></div><div class="c" style="left:106px;top:124.5px;width:95px"><span class="z">任务类<i>...</i></span></div><div class="c" style="left:206px;top:124.5px;width:95px"><span>String</span></div><div class="c" style="left:426px;top:124.5px;width:75px"><span style="font-size:24.300px">TAS<i>...</i></span></div><div class="c" style="left:506px;top:124.5px;width:75px"><span>VAR<i>...</i></span></div><div class="c" style="left:676px;top:124.5px;width:1058px"><span class="z">任务类型</span></div><svg class="ic ck" style="left:386.0px;top:126.5px" width="12" height="10"><path d="M1.200 5.200l3 3.200L10.800 1.500" fill="none" stroke="#000" stroke-width="2"/></svg><svg class="ic" style="left:10px;top:147px" width="9" height="11" ><use href="#iAt"/></svg><div class="c" style="left:26px;top:144.5px;width:75px"><span>bug<i>...</i></span></div><div class="c" style="left:106px;top:144.5px;width:95px"><span class="z">缺陷产<i>...</i></span></div><div class="c" style="left:206px;top:144.5px;width:95px"><span>String</span></div><div class="c" style="left:426px;top:144.5px;width:75px"><span style="font-size:24.300px">BUG<i>...</i></span></div><div class="c" style="left:506px;top:144.5px;width:75px"><span>VAR<i>...</i></span></div><div class="c" style="left:676px;top:144.5px;width:1058px"><span class="z">缺陷产生原因</span></div><svg class="ic ck" style="left:386.0px;top:146.5px" width="12" height="10"><path d="M1.200 5.200l3 3.200L10.800 1.500" fill="none" stroke="#000" stroke-width="2"/></svg><svg class="ic" style="left:10px;top:167px" width="9" height="11" ><use href="#iAt"/></svg><div class="c" style="left:26px;top:164.5px;width:75px"><span>bug<i>...</i></span></div><div class="c" style="left:106px;top:164.5px;width:95px"><span class="z">缺陷出<i>...</i></span></div><div class="c" style="left:206px;top:164.5px;width:95px"><span>String</span></div><div class="c" style="left:426px;top:164.5px;width:75px"><span style="font-size:24.300px">BUG<i>...</i></span></div><div class="c" style="left:506px;top:164.5px;width:75px"><span>VAR<i>...</i></span></div><div class="c" style="left:676px;top:164.5px;width:1058px"><span class="z">缺陷出现频率</span></div><svg class="ic ck" style="left:386.0px;top:166.5px" width="12" height="10"><path d="M1.200 5.200l3 3.200L10.800 1.500" fill="none" stroke="#000" stroke-width="2"/></svg><svg class="ic" style="left:10px;top:187px" width="9" height="11" ><use href="#iAt"/></svg><div class="c" style="left:26px;top:184.5px;width:75px"><span>bug<i>...</i></span></div><div class="c" style="left:106px;top:184.5px;width:95px"><span class="z">缺陷类<i>...</i></span></div><div class="c" style="left:206px;top:184.5px;width:95px"><span>String</span></div><div class="c" style="left:426px;top:184.5px;width:75px"><span style="font-size:24.300px">BUG<i>...</i></span></div><div class="c" style="left:506px;top:184.5px;width:75px"><span>VAR<i>...</i></span></div><div class="c" style="left:676px;top:184.5px;width:1058px"><span class="z">缺陷类别</span></div><svg class="ic ck" style="left:386.0px;top:186.5px" width="12" height="10"><path d="M1.200 5.200l3 3.200L10.800 1.500" fill="none" stroke="#000" stroke-width="2"/></svg><svg class="ic" style="left:10px;top:207px" width="9" height="11" ><use href="#iAt"/></svg><div class="c" style="left:26px;top:204.5px;width:75px"><span>curr<i>...</i></span></div><div class="c" style="left:106px;top:204.5px;width:95px"><span class="z">当前自<i>...</i></span></div><div class="c" style="left:206px;top:204.5px;width:95px"><span>String</span></div><div class="c" style="left:426px;top:204.5px;width:75px"><span style="font-size:24.300px">CUR<i>...</i></span></div><div class="c" style="left:506px;top:204.5px;width:75px"><span>VAR<i>...</i></span></div><div class="c" style="left:676px;top:204.5px;width:1058px"><span class="z">当前自管理版本ID</span></div><svg class="ic ck" style="left:386.0px;top:206.5px" width="12" height="10"><path d="M1.200 5.200l3 3.200L10.800 1.500" fill="none" stroke="#000" stroke-width="2"/></svg><svg class="ic" style="left:10px;top:227px" width="9" height="11" ><use href="#iAt"/></svg><div class="c" style="left:26px;top:224.5px;width:75px"><span>com<i>...</i></span></div><div class="c" style="left:106px;top:224.5px;width:95px"><span class="z">相关的<i>...</i></span></div><div class="c" style="left:206px;top:224.5px;width:95px"><span>String</span></div><div class="c" style="left:426px;top:224.5px;width:75px"><span style="font-size:24.300px">CO<i>...</i></span></div><div class="c" style="left:506px;top:224.5px;width:75px"><span>VAR<i>...</i></span></div><div class="c" style="left:676px;top:224.5px;width:1058px"><span class="z">相关的组件<em>，</em>多个逗号分隔</span></div><svg class="ic ck" style="left:386.0px;top:226.5px" width="12" height="10"><path d="M1.200 5.200l3 3.200L10.800 1.500" fill="none" stroke="#000" stroke-width="2"/></svg><svg class="ic" style="left:10px;top:247px" width="9" height="11" ><use href="#iAt"/></svg><div class="c" style="left:26px;top:244.5px;width:75px"><span>planId</span></div><div class="c" style="left:106px;top:244.5px;width:95px"><span class="z">计划ID</span></div><div class="c" style="left:206px;top:244.5px;width:95px"><span>String</span></div><div class="c" style="left:426px;top:244.5px;width:75px"><span style="font-size:24.300px">PLA<i>...</i></span></div><div class="c" style="left:506px;top:244.5px;width:75px"><span>VAR<i>...</i></span></div><div class="c" style="left:676px;top:244.5px;width:1058px"><span class="z">计划ID</span></div><svg class="ic ck" style="left:386.0px;top:246.5px" width="12" height="10"><path d="M1.200 5.200l3 3.200L10.800 1.500" fill="none" stroke="#000" stroke-width="2"/></svg><svg class="ic" style="left:10px;top:267px" width="9" height="11" ><use href="#iAt"/></svg><div class="c" style="left:26px;top:264.5px;width:75px"><span>begi<i>...</i></span></div><div class="c" style="left:106px;top:264.5px;width:95px"><span class="z">开始时<i>...</i></span></div><div class="c" style="left:206px;top:264.5px;width:95px"><span>TimeS<i>...</i></span></div><div class="c" style="left:426px;top:264.5px;width:75px"><span style="font-size:24.300px">BEGI<i>...</i></span></div><div class="c" style="left:506px;top:264.5px;width:75px"><span>DAT<i>...</i></span></div><div class="c" style="left:676px;top:264.5px;width:1058px"><span class="z">开始时间</span></div><svg class="ic ck" style="left:386.0px;top:266.5px" width="12" height="10"><path d="M1.200 5.200l3 3.200L10.800 1.500" fill="none" stroke="#000" stroke-width="2"/></svg><svg class="ic" style="left:10px;top:287px" width="9" height="11" ><use href="#iAt"/></svg><div class="c" style="left:26px;top:284.5px;width:75px"><span>new<i>...</i></span></div><div class="c" style="left:106px;top:284.5px;width:95px"><span class="z">新增属<i>...</i></span></div><div class="c" style="left:206px;top:284.5px;width:95px"><span>String</span></div><div class="c" style="left:426px;top:284.5px;width:75px"><span style="font-size:24.300px">NE<i>...</i></span></div><div class="c" style="left:506px;top:284.5px;width:75px"><span>VAR<i>...</i></span></div><div class="c" style="left:676px;top:284.5px;width:1058px"><span class="z">新增属性</span></div><svg class="ic ck" style="left:386.0px;top:286.5px" width="12" height="10"><path d="M1.200 5.200l3 3.200L10.800 1.500" fill="none" stroke="#000" stroke-width="2"/></svg><svg class="ic" style="left:10px;top:307px" width="9" height="11" ><use href="#iAt"/></svg><div class="c" style="left:26px;top:304.5px;width:75px"><span>wor<i>...</i></span></div><div class="c" style="left:106px;top:304.5px;width:95px"><span class="z">工作项<i>...</i></span></div><div class="c" style="left:206px;top:304.5px;width:95px"><span>String</span></div><svg class="ic" style="left:10px;top:327px" width="9" height="11" ><use href="#iAt"/></svg><div class="c" style="left:26px;top:324.5px;width:75px"><span>time<i>...</i></span></div><div class="c" style="left:106px;top:324.5px;width:95px"><span class="z">根据子<i>...</i></span></div><div class="c" style="left:206px;top:324.5px;width:95px"><span>Int</span></div><svg class="ic" style="left:10px;top:347px" width="9" height="11" ><use href="#iAt"/></svg><div class="c" style="left:26px;top:344.5px;width:75px"><span>com<i>...</i></span></div><div class="c" style="left:106px;top:344.5px;width:95px"><span class="z">完成进<i>...</i></span></div><div class="c" style="left:206px;top:344.5px;width:95px"><span>Double</span></div><svg class="ic" style="left:10px;top:367px" width="9" height="11" ><use href="#iAt"/></svg><div class="c" style="left:26px;top:364.5px;width:75px"><span>com<i>...</i></span></div><div class="c" style="left:106px;top:364.5px;width:95px"><span class="z">根据子<i>...</i></span></div><div class="c" style="left:206px;top:364.5px;width:95px"><span>Double</span></div><svg class="ic" style="left:10px;top:387px" width="9" height="11" ><use href="#iAt"/></svg><div class="c" style="left:26px;top:384.5px;width:75px"><span>curr<i>...</i></span></div><div class="c" style="left:106px;top:384.5px;width:95px"><span class="z">当前自<i>...</i></span></div><div class="c" style="left:206px;top:384.5px;width:95px"><span>String</span></div><svg class="ic" style="left:8px;top:405px" width="13" height="13" ><use href="#iGr"/></svg><div class="c" style="left:26px;top:404.5px;width:75px"><span>labels</span></div><div class="c" style="left:106px;top:404.5px;width:95px"><span class="z">标签</span></div><div class="c" style="left:206px;top:404.5px;width:95px"><span>sdo:La<i>...</i></span></div><svg class="ic ck" style="left:326.0px;top:406.5px" width="12" height="10"><path d="M1.200 5.200l3 3.200L10.800 1.500" fill="none" stroke="#000" stroke-width="2"/></svg><svg class="ic" style="left:8px;top:425px" width="13" height="13" ><use href="#iGr"/></svg><div class="c" style="left:26px;top:424.5px;width:75px"><span>atta<i>...</i></span></div><div class="c" style="left:106px;top:424.5px;width:95px"><span class="z">附件</span></div><div class="c" style="left:206px;top:424.5px;width:95px"><span>sdo:Fi<i>...</i></span></div><svg class="ic ck" style="left:326.0px;top:426.5px" width="12" height="10"><path d="M1.200 5.200l3 3.200L10.800 1.500" fill="none" stroke="#000" stroke-width="2"/></svg><svg class="ic" style="left:8px;top:445px" width="13" height="13" ><use href="#iGr"/></svg><div class="c" style="left:26px;top:444.5px;width:75px"><span>wor<i>...</i></span></div><div class="c" style="left:106px;top:444.5px;width:95px"><span class="z">评论</span></div><div class="c" style="left:206px;top:444.5px;width:95px"><span>sdo:C<i>...</i></span></div><svg class="ic ck" style="left:326.0px;top:446.5px" width="12" height="10"><path d="M1.200 5.200l3 3.200L10.800 1.500" fill="none" stroke="#000" stroke-width="2"/></svg><svg class="ic" style="left:8px;top:465px" width="13" height="13" ><use href="#iGr"/></svg><div class="c" style="left:26px;top:464.5px;width:75px"><span>child<i>...</i></span></div><div class="c" style="left:106px;top:464.5px;width:95px"><span class="z">子工作<i>...</i></span></div><div class="c" style="left:206px;top:464.5px;width:95px"><span>sdo:W<i>...</i></span></div><svg class="ic ck" style="left:326.0px;top:466.5px" width="12" height="10"><path d="M1.200 5.200l3 3.200L10.800 1.500" fill="none" stroke="#000" stroke-width="2"/></svg><svg class="ic" style="left:8px;top:485px" width="13" height="13" ><use href="#iGr"/></svg><div class="c" style="left:26px;top:484.5px;width:75px"><span>field<i>...</i></span></div><div class="c" style="left:206px;top:484.5px;width:95px"><span>sdo:Fi<i>...</i></span></div><svg class="ic ck" style="left:326.0px;top:486.5px" width="12" height="10"><path d="M1.200 5.200l3 3.200L10.800 1.500" fill="none" stroke="#000" stroke-width="2"/></svg><svg class="ic" style="left:8px;top:505px" width="13" height="13" ><use href="#iGr"/></svg><div class="c" style="left:26px;top:504.5px;width:75px"><span>test<i>...</i></span></div><div class="c" style="left:206px;top:504.5px;width:95px"><span>sdo:T<i>...</i></span></div><svg class="ic ck" style="left:326.0px;top:506.5px" width="12" height="10"><path d="M1.200 5.200l3 3.200L10.800 1.500" fill="none" stroke="#000" stroke-width="2"/></svg><svg class="ic" style="left:8px;top:525px" width="13" height="13" ><use href="#iGr"/></svg><div class="c" style="left:26px;top:524.5px;width:75px"><span>wor<i>...</i></span></div><div class="c" style="left:206px;top:524.5px;width:95px"><span>sdo:W<i>...</i></span></div><svg class="ic ck" style="left:326.0px;top:526.5px" width="12" height="10"><path d="M1.200 5.200l3 3.200L10.800 1.500" fill="none" stroke="#000" stroke-width="2"/></svg><svg class="ic" style="left:8px;top:545px" width="13" height="13" ><use href="#iGr"/></svg><div class="c" style="left:26px;top:544.5px;width:75px"><span>wor<i>...</i></span></div><div class="c" style="left:206px;top:544.5px;width:95px"><span>sdo:W<i>...</i></span></div><svg class="ic ck" style="left:326.0px;top:546.5px" width="12" height="10"><path d="M1.200 5.200l3 3.200L10.800 1.500" fill="none" stroke="#000" stroke-width="2"/></svg><svg class="ic" style="left:8px;top:565px" width="13" height="13" ><use href="#iGr"/></svg><div class="c" style="left:26px;top:564.5px;width:75px"><span>self<i>...</i></span></div><div class="c" style="left:206px;top:564.5px;width:95px"><span>sdo:G<i>...</i></span></div><svg class="ic ck" style="left:326.0px;top:566.5px" width="12" height="10"><path d="M1.200 5.200l3 3.200L10.800 1.500" fill="none" stroke="#000" stroke-width="2"/></svg><svg class="ic" style="left:8px;top:585px" width="13" height="13" ><use href="#iGr"/></svg><div class="c" style="left:26px;top:584.5px;width:75px"><span>wor<i>...</i></span></div><div class="c" style="left:206px;top:584.5px;width:95px"><span>sdo:W<i>...</i></span></div><svg class="ic ck" style="left:386.0px;top:586.5px" width="12" height="10"><path d="M1.200 5.200l3 3.200L10.800 1.500" fill="none" stroke="#000" stroke-width="2"/></svg><div style="left:1737px;top:2px;width:34px;height:634px;background:#f0f0f0"></div><div style="left:1744px;top:337px;width:19px;height:265px;background:#868686"></div></div></div><div style="left:0px;top:1048px;width:1798px;height:1px;background:#9c9c9c"></div><svg class="ic" style="left:25px;top:1084px" width="22" height="22"><circle cx="11" cy="11" r="9.800" fill="#f7f8fb" stroke="#5a6788" stroke-width="1.300"/></svg><div style="left:25px;top:1084px;width:22px;height:22px;line-height:22px;text-align:center;font-size:16px;font-weight:bold;color:#5a6788">?</div><div style="left:1400px;top:1077px;width:181px;height:39px;background:#fcfcfc;border:1.500px solid #1a6fc4;border-radius:5px"><div class="cj" style="left:0;top:0;width:178px;text-align:center;line-height:36px">确定</div></div><div style="left:1595px;top:1077px;width:181px;height:39px;background:#fdfdfd;border:1px solid #d2d2d2;border-radius:5px"><div class="cj" style="left:0;top:0;width:179px;text-align:center;line-height:37px">取消</div></div></div>
<svg class="ic" style="left:813px;top:9px" width="280" height="48"><rect x="1.500" y="1.500" width="277" height="45" rx="7" fill="none" stroke="#fa2418" stroke-width="2.100"/></svg>
<svg class="ic" style="left:2086px;top:93px" width="224" height="205"><rect x="1.500" y="1.500" width="221" height="202" rx="8" fill="none" stroke="#fa2418" stroke-width="2.100"/></svg>
<svg class="ic" style="left:357px;top:937px" width="830" height="42"><rect x="1.500" y="1.500" width="827" height="39" rx="4.5" fill="none" stroke="#fa2418" stroke-width="2.100"/></svg>
<svg class="ic" style="left:1185px;top:940px" width="160" height="32"><path d="M5.800 20.600L20.500 10l-2.100 4.600L151 5.200 18.400 23.100l3.400 4z" fill="#fa2418" stroke="#fa2418" stroke-width=".6" stroke-linejoin="round"/></svg>
</body></html>
